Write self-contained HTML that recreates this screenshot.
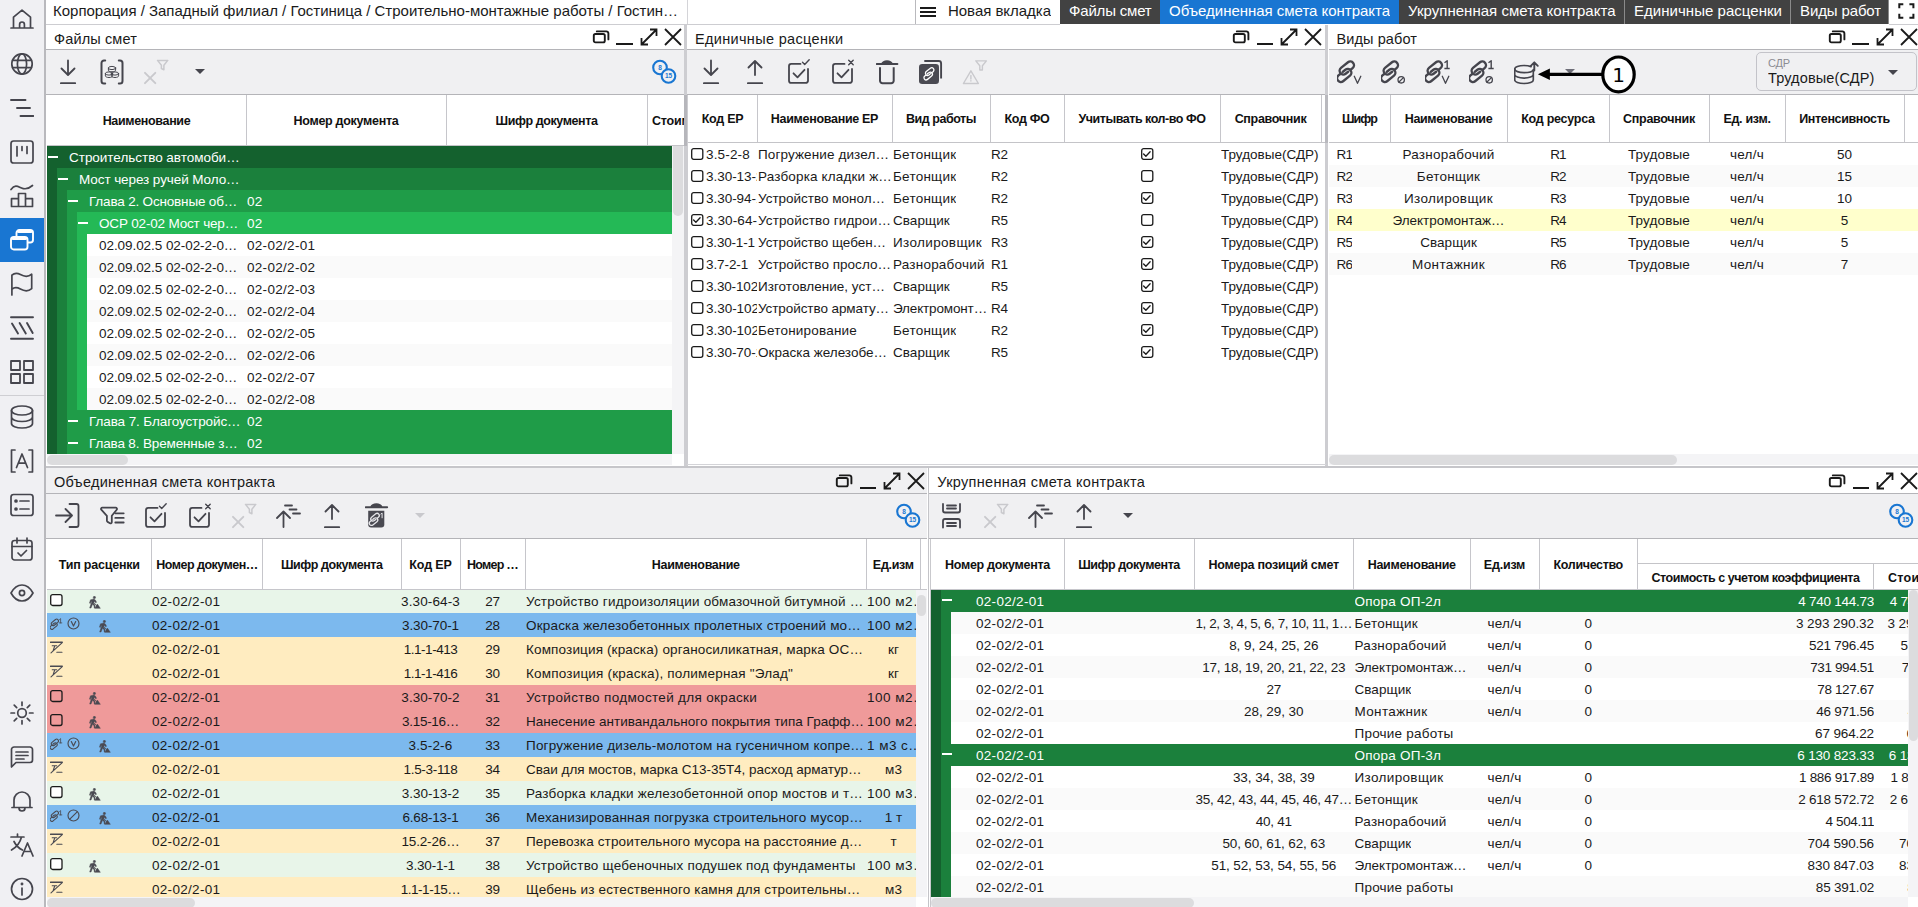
<!DOCTYPE html>
<html lang="ru"><head><meta charset="utf-8"><title>Смета контракта</title>
<style>
html,body{margin:0;padding:0}
body{width:1918px;height:907px;position:relative;overflow:hidden;background:#fff;font-family:"Liberation Sans",sans-serif;color:#1a1a1a}
.r{position:absolute;display:block}
.t{position:absolute;white-space:nowrap;overflow:hidden}
.e{text-overflow:ellipsis}
</style></head><body>
<div class="r" style="left:0px;top:0px;width:44px;height:907px;background:#f0f0f3;"></div>
<div class="r" style="left:44px;top:0px;width:2px;height:907px;background:#b9b9bd;"></div>
<div class="r" style="left:0px;top:218px;width:44px;height:44px;background:#1976d2;"></div>
<div class="r" style="left:0px;top:395px;width:44px;height:1px;background:#cfcfd3;"></div>
<svg class="r" style="left:10px;top:7px;stroke-width:1.7;" width="24" height="24" viewBox="0 0 24 24" fill="none" stroke="#45454d" stroke-width="1.8" stroke-linecap="round" stroke-linejoin="round"><path d="M1 21h22M3.5 21V10.2L12 3.2l8.5 7V21M9.6 21v-3.6a2.4 2.4 0 0 1 4.8 0V21"/></svg>
<svg class="r" style="left:10px;top:52px;stroke-width:1.7;" width="24" height="24" viewBox="0 0 24 24" fill="none" stroke="#45454d" stroke-width="1.8" stroke-linecap="round" stroke-linejoin="round"><circle cx="12" cy="12" r="10.2"/><ellipse cx="12" cy="12" rx="4.6" ry="10.2"/><path d="M2.6 8.4h18.8M2.6 15.6h18.8"/></svg>
<svg class="r" style="left:10px;top:96px;stroke-width:1.9;" width="24" height="24" viewBox="0 0 24 24" fill="none" stroke="#45454d" stroke-width="1.8" stroke-linecap="round" stroke-linejoin="round"><path d="M1 4h14.5M7 12h13M10.5 20h13"/></svg>
<svg class="r" style="left:10px;top:140px;stroke-width:1.7;" width="24" height="24" viewBox="0 0 24 24" fill="none" stroke="#45454d" stroke-width="1.8" stroke-linecap="round" stroke-linejoin="round"><rect x="1" y="1" width="22" height="22" rx="2.6"/><path d="M7 6.5v9.5M12 6.5v4M17 6.5v7"/></svg>
<svg class="r" style="left:10px;top:184px;stroke-width:1.7;" width="24" height="24" viewBox="0 0 24 24" fill="none" stroke="#45454d" stroke-width="1.8" stroke-linecap="round" stroke-linejoin="round"><path d="M1 5.5c4-5.5 7-3 10.5-1.5s7 1 11-2.5"/><path d="M1.5 22.5v-7.8h7v7.8M8.5 22.5V9.5h7v13M15.5 22.5v-7.8h7v7.8M1.5 22.5h21"/></svg>
<svg class="r" style="left:10px;top:228px;stroke-width:1.9;stroke:#fff;" width="24" height="24" viewBox="0 0 24 24" fill="none" stroke="#45454d" stroke-width="1.8" stroke-linecap="round" stroke-linejoin="round"><rect x="6.500" y="2" width="16.500" height="12.500" rx="2.800"/><path d="M8.500 3.400h12.500" stroke-width="3"/><rect x="1" y="9" width="16.500" height="12.500" rx="2.800" fill="#1976d2"/><path d="M3 10.400h12.500" stroke-width="3"/></svg>
<svg class="r" style="left:10px;top:272px;stroke-width:1.7;" width="24" height="24" viewBox="0 0 24 24" fill="none" stroke="#45454d" stroke-width="1.8" stroke-linecap="round" stroke-linejoin="round"><path d="M1.900 23V3.200c2-1.800 4.500-2.800 8.500-.6s7.500 2.800 11.300-.4v14.500c-3.800 3.200-7.300 2.600-11.300.4s-6.500-1.600-8.500.2"/></svg>
<svg class="r" style="left:10px;top:316px;stroke-width:1.9;" width="24" height="24" viewBox="0 0 24 24" fill="none" stroke="#45454d" stroke-width="1.8" stroke-linecap="round" stroke-linejoin="round"><path d="M1 1.200h22M1 22.800h22"/><path d="M2 7.500l6 10M9.600 7l6.200 10.500M17 7l5.700 10" /></svg>
<svg class="r" style="left:10px;top:360px;stroke-width:1.8;" width="24" height="24" viewBox="0 0 24 24" fill="none" stroke="#45454d" stroke-width="1.8" stroke-linecap="round" stroke-linejoin="round"><rect x="1" y="1" width="9" height="9"/><rect x="14" y="1" width="9" height="9"/><rect x="1" y="14" width="9" height="9"/><rect x="14" y="14" width="9" height="9"/></svg>
<svg class="r" style="left:10px;top:405px;stroke-width:1.7;" width="24" height="24" viewBox="0 0 24 24" fill="none" stroke="#45454d" stroke-width="1.8" stroke-linecap="round" stroke-linejoin="round"><ellipse cx="12" cy="5.5" rx="10.5" ry="4.5"/><path d="M1.5 5.5v13c0 2.5 4.7 4.5 10.5 4.5s10.5-2 10.5-4.5v-13M1.5 12c0 2.5 4.7 4.5 10.5 4.5s10.5-2 10.5-4.5"/></svg>
<svg class="r" style="left:10px;top:449px;stroke-width:1.7;" width="24" height="24" viewBox="0 0 24 24" fill="none" stroke="#45454d" stroke-width="1.8" stroke-linecap="round" stroke-linejoin="round"><path d="M5 1H1.5v22H5M19 1h3.5v22H19"/><path d="M6.5 18.5L12 5l5.5 13.500M8.300 14.200h7.4"/></svg>
<svg class="r" style="left:10px;top:493px;stroke-width:1.7;" width="24" height="24" viewBox="0 0 24 24" fill="none" stroke="#45454d" stroke-width="1.8" stroke-linecap="round" stroke-linejoin="round"><rect x="1" y="1.5" width="22" height="21" rx="2.6"/><path d="M10 8h9M10 16h9"/><circle cx="6" cy="8" r="1" fill="#45454d"/><circle cx="6" cy="16" r="1" fill="#45454d"/></svg>
<svg class="r" style="left:10px;top:537px;stroke-width:1.7;" width="24" height="24" viewBox="0 0 24 24" fill="none" stroke="#45454d" stroke-width="1.8" stroke-linecap="round" stroke-linejoin="round"><rect x="2" y="3.5" width="20" height="19.5" rx="2.6"/><path d="M2 9.500h20M7 1v5M17 1v5M8 16l3 3 5.500-5.500"/></svg>
<svg class="r" style="left:10px;top:581px;stroke-width:1.7;" width="24" height="24" viewBox="0 0 24 24" fill="none" stroke="#45454d" stroke-width="1.8" stroke-linecap="round" stroke-linejoin="round"><path d="M1 12c3-5.500 7-8 11-8s8 2.500 11 8c-3 5.500-7 8-11 8s-8-2.500-11-8z"/><circle cx="12" cy="12" r="2.600"/></svg>
<svg class="r" style="left:10px;top:701px;stroke-width:1.7;" width="24" height="24" viewBox="0 0 24 24" fill="none" stroke="#45454d" stroke-width="1.8" stroke-linecap="round" stroke-linejoin="round"><circle cx="12" cy="12" r="4.300"/><path d="M12 1v3.500M12 19.500V23M1 12h3.500M19.500 12H23M4.200 4.200l2.500 2.500M17.300 17.300l2.500 2.500M19.800 4.200l-2.500 2.500M6.700 17.300l-2.500 2.500"/></svg>
<svg class="r" style="left:10px;top:745px;stroke-width:1.7;" width="24" height="24" viewBox="0 0 24 24" fill="none" stroke="#45454d" stroke-width="1.8" stroke-linecap="round" stroke-linejoin="round"><path d="M1.500 22V4.600A2.600 2.600 0 0 1 4.100 2h15.800a2.600 2.600 0 0 1 2.600 2.600v10.300a2.600 2.600 0 0 1-2.600 2.600H6z"/><path d="M6 7h12M6 10.500h12M6 14h8"/></svg>
<svg class="r" style="left:10px;top:789px;stroke-width:1.7;" width="24" height="24" viewBox="0 0 24 24" fill="none" stroke="#45454d" stroke-width="1.8" stroke-linecap="round" stroke-linejoin="round"><path d="M2 18.500h20M4 18.500V11a8 8 0 0 1 16 0v7.500M9 19a3 3 0 0 0 6 0"/></svg>
<svg class="r" style="left:10px;top:833px;stroke-width:1.7;" width="24" height="24" viewBox="0 0 24 24" fill="none" stroke="#45454d" stroke-width="1.8" stroke-linecap="round" stroke-linejoin="round"><path d="M1 4h13M7.500 1v3M11.500 4C10 10 6 14.500 1.500 17M4 8.500c2 4 5 7 8.500 8.500"/><path d="M12 23l5.500-13L23 23M14 18.500h7"/></svg>
<svg class="r" style="left:10px;top:877px;stroke-width:1.7;" width="24" height="24" viewBox="0 0 24 24" fill="none" stroke="#45454d" stroke-width="1.8" stroke-linecap="round" stroke-linejoin="round"><circle cx="12" cy="12" r="10.500"/><path d="M12 11v7"/><circle cx="12" cy="7" r="0.600" fill="#45454d"/></svg>
<div class="t" style="left:53px;top:-0.6px;height:24px;line-height:24px;font-size:15px;letter-spacing:-0.014px;">Корпорация / Западный филиал / Гостиница / Строительно-монтажные работы / Гостин…</div>
<div class="r" style="left:915px;top:0px;width:1px;height:24px;background:#b9b9bd;"></div>
<div class="r" style="left:920px;top:7px;width:16px;height:2px;background:#1a1a1a;"></div>
<div class="r" style="left:920px;top:11px;width:16px;height:2px;background:#1a1a1a;"></div>
<div class="r" style="left:920px;top:15px;width:16px;height:2px;background:#1a1a1a;"></div>
<div class="t" style="left:948px;top:-0.6px;height:24px;line-height:24px;font-size:15px;letter-spacing:-0.030px;">Новая вкладка</div>
<div class="r" style="left:1060px;top:0px;width:829px;height:24px;background:#8a8a8a;"></div>
<div class="r" style="left:1060px;top:0px;width:100px;height:24px;background:#424242;"></div>
<div class="t" style="left:1069px;top:-0.6px;height:24px;line-height:24px;font-size:15px;color:#fff;letter-spacing:-0.185px;">Файлы смет</div>
<div class="r" style="left:1160px;top:0px;width:239px;height:24px;background:#1976d2;"></div>
<div class="t" style="left:1169px;top:-0.6px;height:24px;line-height:24px;font-size:15px;color:#fff;letter-spacing:-0.023px;">Объединенная смета контракта</div>
<div class="r" style="left:1399px;top:0px;width:225px;height:24px;background:#424242;"></div>
<div class="t" style="left:1408px;top:-0.6px;height:24px;line-height:24px;font-size:15px;color:#fff;letter-spacing:0.034px;">Укрупненная смета контракта</div>
<div class="r" style="left:1625px;top:0px;width:165px;height:24px;background:#424242;"></div>
<div class="t" style="left:1634px;top:-0.6px;height:24px;line-height:24px;font-size:15px;color:#fff;letter-spacing:0.036px;">Единичные расценки</div>
<div class="r" style="left:1791px;top:0px;width:97px;height:24px;background:#424242;"></div>
<div class="t" style="left:1800px;top:-0.6px;height:24px;line-height:24px;font-size:15px;color:#fff;letter-spacing:-0.124px;">Виды работ</div>
<svg class="r" style="left:1894px;top:0px;stroke:#1a1a1a;stroke-width:2;stroke-linecap:butt;stroke-linejoin:miter" width="24" height="24" viewBox="0 0 24 24" fill="none" stroke="#45454d" stroke-width="1.8" stroke-linecap="round" stroke-linejoin="round"><path d="M5.300 8.200V4.200h4M15.400 4.200h4v4M19.400 13.700v4h-4M9.300 17.700h-4v-4"/></svg>
<div class="r" style="left:46px;top:24.3px;width:639px;height:24.7px;background:#ffffff;"></div>
<div class="t" style="left:54px;top:26.6px;height:25px;line-height:25px;font-size:14.5px;letter-spacing:0.146px;">Файлы смет</div>
<div class="r" style="left:46px;top:49px;width:639px;height:1px;background:#b4b4b8;"></div>
<div class="r" style="left:46px;top:50px;width:639px;height:44px;background:#f0f0f2;"></div>
<div class="r" style="left:46px;top:94px;width:639px;height:1px;background:#b4b4b8;"></div>
<svg class="r" style="left:591.5px;top:25px;stroke:#1a1a1a;stroke-width:1.900" width="20" height="24" viewBox="0 0 20 24" fill="none" stroke="#45454d" stroke-width="1.8" stroke-linecap="round" stroke-linejoin="round"><rect x="1.8" y="9" width="11" height="8.4" rx="1.6"/><path d="M4.8 6.4h9.6a2 2 0 0 1 2 2v6"/></svg>
<div class="r" style="left:616.0px;top:43.2px;width:16.5px;height:1.6px;background:#1a1a1a;"></div>
<svg class="r" style="left:638.5px;top:27px;stroke:#1a1a1a;stroke-width:1.800;stroke-linecap:butt;stroke-linejoin:miter" width="20" height="20" viewBox="0 0 20 20" fill="none" stroke="#45454d" stroke-width="1.8" stroke-linecap="round" stroke-linejoin="round"><path d="M2.5 17.5L17.5 2.5M11 2.5h6.5V9M2.5 11v6.5H9"/></svg>
<svg class="r" style="left:662.5px;top:27px;stroke:#1a1a1a;stroke-width:1.800;stroke-linecap:butt" width="20" height="20" viewBox="0 0 20 20" fill="none" stroke="#45454d" stroke-width="1.8" stroke-linecap="round" stroke-linejoin="round"><path d="M2 2l16 16M18 2L2 18"/></svg>
<svg class="r" style="left:60px;top:58px;" width="28" height="28" viewBox="0 0 28 28" fill="none" stroke="#45454d" stroke-width="1.8" stroke-linecap="round" stroke-linejoin="round"><path d="M8 2.500v14M1.500 10.500L8 17l6.500-6.500M0.800 25.200h14.400"/></svg>
<svg class="r" style="left:100px;top:58px;" width="28" height="28" viewBox="0 0 28 28" fill="none" stroke="#45454d" stroke-width="1.8" stroke-linecap="round" stroke-linejoin="round"><path d="M5.200 2.500H4a2.500 2.500 0 0 0-2.500 2.500v18A2.500 2.500 0 0 0 4 25.500h1.200M18.800 2.500H20a2.500 2.500 0 0 1 2.500 2.500v18a2.500 2.500 0 0 1-2.500 2.500h-1.200" stroke-width="2"/><g stroke-width="1"><ellipse cx="12" cy="10" rx="3.600" ry="1.600"/><path d="M8.400 10v2.200c0 .9 1.600 1.600 3.600 1.600s3.600-.7 3.600-1.600V10"/><ellipse cx="9" cy="15.500" rx="3.600" ry="1.600"/><path d="M5.400 15.500v2.400c0 .9 1.600 1.600 3.600 1.600s3.600-.7 3.600-1.600v-2.400"/><ellipse cx="15" cy="15.500" rx="3.600" ry="1.600"/><path d="M11.400 15.500v2.400c0 .9 1.600 1.600 3.600 1.600s3.600-.7 3.600-1.600v-2.400"/></g></svg>
<svg class="r" style="left:144.1px;top:58px;stroke:#c9c9cd;stroke-width:1.900" width="28" height="28" viewBox="0 0 28 28" fill="none" stroke="#45454d" stroke-width="1.8" stroke-linecap="round" stroke-linejoin="round"><path d="M1 14.800l10.300 10.400M11.300 14.800L1 25.200"/><path d="M13.500 2.400h10.300l-3.900 4.800v4.600l-2.500-1.300V7.200z" stroke-width="1.500"/></svg>
<svg class="r" style="left:195px;top:69px" width="10" height="5" viewBox="0 0 10 5"><path d="M0 0h10L5 5z" fill="#45454d"/></svg>
<svg class="r" style="left:651px;top:59px" width="28" height="28" viewBox="0 0 28 28" fill="#f0f0f2" stroke="#1976d2" stroke-width="2.100"><circle cx="9" cy="8.500" r="6.800"/><circle cx="17.500" cy="17" r="6.800"/><text x="9" y="10.800" font-size="6.500" font-weight="bold" text-anchor="middle" fill="#1976d2" stroke="none" font-family="Liberation Sans,sans-serif">8</text><text x="17.500" y="19.300" font-size="6.500" font-weight="bold" text-anchor="middle" fill="#1976d2" stroke="none" font-family="Liberation Sans,sans-serif">15</text></svg>
<div class="t" style="left:47px;top:95.9px;height:50px;line-height:50px;font-size:12.5px;font-weight:bold;color:#111;width:199px;text-align:center;letter-spacing:-0.342px;">Наименование</div>
<div class="r" style="left:246px;top:95px;width:1px;height:50px;background:#c6c6cb;"></div>
<div class="t" style="left:246px;top:95.9px;height:50px;line-height:50px;font-size:12.5px;font-weight:bold;color:#111;width:200px;text-align:center;letter-spacing:-0.282px;">Номер документа</div>
<div class="r" style="left:446px;top:95px;width:1px;height:50px;background:#c6c6cb;"></div>
<div class="t" style="left:446px;top:95.9px;height:50px;line-height:50px;font-size:12.5px;font-weight:bold;color:#111;width:201px;text-align:center;letter-spacing:-0.409px;">Шифр документа</div>
<div class="r" style="left:647px;top:95px;width:1px;height:50px;background:#c6c6cb;"></div>
<div class="r" style="left:47px;top:145px;width:637px;height:1px;background:#c4c4c8;"></div>
<div class="t" style="left:652px;top:95.9px;height:50px;line-height:50px;font-size:12.5px;font-weight:bold;color:#111;width:32px;text-align:left;letter-spacing:-0.225px;">Стоимость</div>
<div class="r" style="left:47px;top:146px;width:625px;height:22px;background:#14612e;"></div>
<div class="r" style="left:48px;top:155.5px;width:9.5px;height:2px;background:#fff;"></div>
<div class="t" style="left:69px;top:147.0px;height:22px;line-height:22px;font-size:13.5px;color:#fff;letter-spacing:-0.025px;">Строительство автомоби…</div>
<div class="r" style="left:47px;top:168px;width:10px;height:22px;background:#14612e;"></div>
<div class="r" style="left:57px;top:168px;width:615px;height:22px;background:#1b803c;"></div>
<div class="r" style="left:58px;top:177.5px;width:9.5px;height:2px;background:#fff;"></div>
<div class="t" style="left:79px;top:169.0px;height:22px;line-height:22px;font-size:13.5px;color:#fff;letter-spacing:-0.085px;">Мост через ручей Моло…</div>
<div class="r" style="left:47px;top:190px;width:10px;height:22px;background:#14612e;"></div>
<div class="r" style="left:57px;top:190px;width:10px;height:22px;background:#1b803c;"></div>
<div class="r" style="left:67px;top:190px;width:605px;height:22px;background:#1f9c48;"></div>
<div class="r" style="left:68px;top:199.5px;width:9.5px;height:2px;background:#fff;"></div>
<div class="t" style="left:89px;top:191.0px;height:22px;line-height:22px;font-size:13.5px;color:#fff;letter-spacing:-0.179px;">Глава 2. Основные об…</div>
<div class="t" style="left:247px;top:191.0px;height:22px;line-height:22px;font-size:13.5px;color:#fff;letter-spacing:0.343px;">02</div>
<div class="r" style="left:47px;top:212px;width:10px;height:22px;background:#14612e;"></div>
<div class="r" style="left:57px;top:212px;width:10px;height:22px;background:#1b803c;"></div>
<div class="r" style="left:67px;top:212px;width:10px;height:22px;background:#1f9c48;"></div>
<div class="r" style="left:77px;top:212px;width:595px;height:22px;background:#24b956;"></div>
<div class="r" style="left:78px;top:221.5px;width:9.5px;height:2px;background:#fff;"></div>
<div class="t" style="left:99px;top:213.0px;height:22px;line-height:22px;font-size:13.5px;color:#fff;letter-spacing:-0.180px;">ОСР 02-02 Мост чер…</div>
<div class="t" style="left:247px;top:213.0px;height:22px;line-height:22px;font-size:13.5px;color:#fff;letter-spacing:0.343px;">02</div>
<div class="r" style="left:47px;top:234px;width:10px;height:22px;background:#14612e;"></div>
<div class="r" style="left:57px;top:234px;width:10px;height:22px;background:#1b803c;"></div>
<div class="r" style="left:67px;top:234px;width:10px;height:22px;background:#1f9c48;"></div>
<div class="r" style="left:77px;top:234px;width:10px;height:22px;background:#24b956;"></div>
<div class="r" style="left:87px;top:234px;width:585px;height:22px;background:#fff;"></div>
<div class="t" style="left:99px;top:235.0px;height:22px;line-height:22px;font-size:13.5px;color:#1a1a1a;letter-spacing:-0.061px;">02.09.02.5 02-02-2-0…</div>
<div class="t" style="left:247px;top:235.0px;height:22px;line-height:22px;font-size:13.5px;color:#1a1a1a;letter-spacing:0.301px;">02-02/2-01</div>
<div class="r" style="left:47px;top:256px;width:10px;height:22px;background:#14612e;"></div>
<div class="r" style="left:57px;top:256px;width:10px;height:22px;background:#1b803c;"></div>
<div class="r" style="left:67px;top:256px;width:10px;height:22px;background:#1f9c48;"></div>
<div class="r" style="left:77px;top:256px;width:10px;height:22px;background:#24b956;"></div>
<div class="r" style="left:87px;top:256px;width:585px;height:22px;background:#fafafa;"></div>
<div class="t" style="left:99px;top:257.0px;height:22px;line-height:22px;font-size:13.5px;color:#1a1a1a;letter-spacing:-0.061px;">02.09.02.5 02-02-2-0…</div>
<div class="t" style="left:247px;top:257.0px;height:22px;line-height:22px;font-size:13.5px;color:#1a1a1a;letter-spacing:0.301px;">02-02/2-02</div>
<div class="r" style="left:47px;top:278px;width:10px;height:22px;background:#14612e;"></div>
<div class="r" style="left:57px;top:278px;width:10px;height:22px;background:#1b803c;"></div>
<div class="r" style="left:67px;top:278px;width:10px;height:22px;background:#1f9c48;"></div>
<div class="r" style="left:77px;top:278px;width:10px;height:22px;background:#24b956;"></div>
<div class="r" style="left:87px;top:278px;width:585px;height:22px;background:#fff;"></div>
<div class="t" style="left:99px;top:279.0px;height:22px;line-height:22px;font-size:13.5px;color:#1a1a1a;letter-spacing:-0.061px;">02.09.02.5 02-02-2-0…</div>
<div class="t" style="left:247px;top:279.0px;height:22px;line-height:22px;font-size:13.5px;color:#1a1a1a;letter-spacing:0.301px;">02-02/2-03</div>
<div class="r" style="left:47px;top:300px;width:10px;height:22px;background:#14612e;"></div>
<div class="r" style="left:57px;top:300px;width:10px;height:22px;background:#1b803c;"></div>
<div class="r" style="left:67px;top:300px;width:10px;height:22px;background:#1f9c48;"></div>
<div class="r" style="left:77px;top:300px;width:10px;height:22px;background:#24b956;"></div>
<div class="r" style="left:87px;top:300px;width:585px;height:22px;background:#fafafa;"></div>
<div class="t" style="left:99px;top:301.0px;height:22px;line-height:22px;font-size:13.5px;color:#1a1a1a;letter-spacing:-0.061px;">02.09.02.5 02-02-2-0…</div>
<div class="t" style="left:247px;top:301.0px;height:22px;line-height:22px;font-size:13.5px;color:#1a1a1a;letter-spacing:0.301px;">02-02/2-04</div>
<div class="r" style="left:47px;top:322px;width:10px;height:22px;background:#14612e;"></div>
<div class="r" style="left:57px;top:322px;width:10px;height:22px;background:#1b803c;"></div>
<div class="r" style="left:67px;top:322px;width:10px;height:22px;background:#1f9c48;"></div>
<div class="r" style="left:77px;top:322px;width:10px;height:22px;background:#24b956;"></div>
<div class="r" style="left:87px;top:322px;width:585px;height:22px;background:#fff;"></div>
<div class="t" style="left:99px;top:323.0px;height:22px;line-height:22px;font-size:13.5px;color:#1a1a1a;letter-spacing:-0.061px;">02.09.02.5 02-02-2-0…</div>
<div class="t" style="left:247px;top:323.0px;height:22px;line-height:22px;font-size:13.5px;color:#1a1a1a;letter-spacing:0.301px;">02-02/2-05</div>
<div class="r" style="left:47px;top:344px;width:10px;height:22px;background:#14612e;"></div>
<div class="r" style="left:57px;top:344px;width:10px;height:22px;background:#1b803c;"></div>
<div class="r" style="left:67px;top:344px;width:10px;height:22px;background:#1f9c48;"></div>
<div class="r" style="left:77px;top:344px;width:10px;height:22px;background:#24b956;"></div>
<div class="r" style="left:87px;top:344px;width:585px;height:22px;background:#fafafa;"></div>
<div class="t" style="left:99px;top:345.0px;height:22px;line-height:22px;font-size:13.5px;color:#1a1a1a;letter-spacing:-0.061px;">02.09.02.5 02-02-2-0…</div>
<div class="t" style="left:247px;top:345.0px;height:22px;line-height:22px;font-size:13.5px;color:#1a1a1a;letter-spacing:0.301px;">02-02/2-06</div>
<div class="r" style="left:47px;top:366px;width:10px;height:22px;background:#14612e;"></div>
<div class="r" style="left:57px;top:366px;width:10px;height:22px;background:#1b803c;"></div>
<div class="r" style="left:67px;top:366px;width:10px;height:22px;background:#1f9c48;"></div>
<div class="r" style="left:77px;top:366px;width:10px;height:22px;background:#24b956;"></div>
<div class="r" style="left:87px;top:366px;width:585px;height:22px;background:#fff;"></div>
<div class="t" style="left:99px;top:367.0px;height:22px;line-height:22px;font-size:13.5px;color:#1a1a1a;letter-spacing:-0.061px;">02.09.02.5 02-02-2-0…</div>
<div class="t" style="left:247px;top:367.0px;height:22px;line-height:22px;font-size:13.5px;color:#1a1a1a;letter-spacing:0.301px;">02-02/2-07</div>
<div class="r" style="left:47px;top:388px;width:10px;height:22px;background:#14612e;"></div>
<div class="r" style="left:57px;top:388px;width:10px;height:22px;background:#1b803c;"></div>
<div class="r" style="left:67px;top:388px;width:10px;height:22px;background:#1f9c48;"></div>
<div class="r" style="left:77px;top:388px;width:10px;height:22px;background:#24b956;"></div>
<div class="r" style="left:87px;top:388px;width:585px;height:22px;background:#fafafa;"></div>
<div class="t" style="left:99px;top:389.0px;height:22px;line-height:22px;font-size:13.5px;color:#1a1a1a;letter-spacing:-0.061px;">02.09.02.5 02-02-2-0…</div>
<div class="t" style="left:247px;top:389.0px;height:22px;line-height:22px;font-size:13.5px;color:#1a1a1a;letter-spacing:0.301px;">02-02/2-08</div>
<div class="r" style="left:47px;top:410px;width:10px;height:22px;background:#14612e;"></div>
<div class="r" style="left:57px;top:410px;width:10px;height:22px;background:#1b803c;"></div>
<div class="r" style="left:67px;top:410px;width:605px;height:22px;background:#1f9c48;"></div>
<div class="r" style="left:68px;top:419.5px;width:9.5px;height:2px;background:#fff;"></div>
<div class="t" style="left:89px;top:411.0px;height:22px;line-height:22px;font-size:13.5px;color:#fff;letter-spacing:-0.097px;">Глава 7. Благоустройс…</div>
<div class="t" style="left:247px;top:411.0px;height:22px;line-height:22px;font-size:13.5px;color:#fff;letter-spacing:0.343px;">02</div>
<div class="r" style="left:47px;top:432px;width:10px;height:22px;background:#14612e;"></div>
<div class="r" style="left:57px;top:432px;width:10px;height:22px;background:#1b803c;"></div>
<div class="r" style="left:67px;top:432px;width:605px;height:22px;background:#1f9c48;"></div>
<div class="r" style="left:68px;top:441.5px;width:9.5px;height:2px;background:#fff;"></div>
<div class="t" style="left:89px;top:433.0px;height:22px;line-height:22px;font-size:13.5px;color:#fff;letter-spacing:-0.142px;">Глава 8. Временные з…</div>
<div class="t" style="left:247px;top:433.0px;height:22px;line-height:22px;font-size:13.5px;color:#fff;letter-spacing:0.343px;">02</div>
<div class="r" style="left:672px;top:146px;width:12px;height:308px;background:#f4f4f6;"></div>
<div class="r" style="left:673px;top:146px;width:9.5px;height:70px;background:#dcdcde;border-radius:0 0 5px 5px"></div>
<div class="r" style="left:47px;top:454px;width:625px;height:11px;background:#f4f4f6;"></div>
<div class="r" style="left:47px;top:455px;width:81px;height:10px;background:#dcdcde;border-radius:5px"></div>
<div class="r" style="left:684.4px;top:25px;width:3.2px;height:441px;background:#cdcdd1;"></div>
<div class="r" style="left:684.4px;top:95px;width:2.4px;height:51px;background:#b6b6bb;"></div>
<div class="r" style="left:687px;top:24.3px;width:639px;height:24.7px;background:#ffffff;"></div>
<div class="t" style="left:695px;top:26.6px;height:25px;line-height:25px;font-size:14.5px;letter-spacing:0.325px;">Единичные расценки</div>
<div class="r" style="left:687px;top:49px;width:639px;height:1px;background:#b4b4b8;"></div>
<div class="r" style="left:687px;top:50px;width:639px;height:44px;background:#f0f0f2;"></div>
<div class="r" style="left:687px;top:94px;width:639px;height:1px;background:#b4b4b8;"></div>
<svg class="r" style="left:1232px;top:25px;stroke:#1a1a1a;stroke-width:1.900" width="20" height="24" viewBox="0 0 20 24" fill="none" stroke="#45454d" stroke-width="1.8" stroke-linecap="round" stroke-linejoin="round"><rect x="1.8" y="9" width="11" height="8.4" rx="1.6"/><path d="M4.8 6.4h9.6a2 2 0 0 1 2 2v6"/></svg>
<div class="r" style="left:1256.5px;top:43.2px;width:16.5px;height:1.6px;background:#1a1a1a;"></div>
<svg class="r" style="left:1279px;top:27px;stroke:#1a1a1a;stroke-width:1.800;stroke-linecap:butt;stroke-linejoin:miter" width="20" height="20" viewBox="0 0 20 20" fill="none" stroke="#45454d" stroke-width="1.8" stroke-linecap="round" stroke-linejoin="round"><path d="M2.5 17.5L17.5 2.5M11 2.5h6.5V9M2.5 11v6.5H9"/></svg>
<svg class="r" style="left:1303px;top:27px;stroke:#1a1a1a;stroke-width:1.800;stroke-linecap:butt" width="20" height="20" viewBox="0 0 20 20" fill="none" stroke="#45454d" stroke-width="1.8" stroke-linecap="round" stroke-linejoin="round"><path d="M2 2l16 16M18 2L2 18"/></svg>
<svg class="r" style="left:703px;top:58px;" width="28" height="28" viewBox="0 0 28 28" fill="none" stroke="#45454d" stroke-width="1.8" stroke-linecap="round" stroke-linejoin="round"><path d="M8 2.500v14M1.500 10.500L8 17l6.500-6.500M0.800 25.200h14.400"/></svg>
<svg class="r" style="left:747px;top:58px;" width="28" height="28" viewBox="0 0 28 28" fill="none" stroke="#45454d" stroke-width="1.8" stroke-linecap="round" stroke-linejoin="round"><path d="M8 17V3M1.500 9.500L8 3l6.500 6.500M0.800 25.200h14.400"/></svg>
<svg class="r" style="left:788px;top:58px;" width="28" height="28" viewBox="0 0 28 28" fill="none" stroke="#45454d" stroke-width="1.8" stroke-linecap="round" stroke-linejoin="round"><path d="M12.500 5.900H3.200a2.200 2.200 0 0 0-2.200 2.200v14.600a2.200 2.200 0 0 0 2.200 2.200h14.600a2.200 2.200 0 0 0 2.200-2.200V11"/><path d="M5.500 15.300l4 4 7-7.500"/><path d="M14.500 4.300l2.200 2.200 4.500-4.800" stroke-width="1.400"/></svg>
<svg class="r" style="left:832px;top:58px;" width="28" height="28" viewBox="0 0 28 28" fill="none" stroke="#45454d" stroke-width="1.8" stroke-linecap="round" stroke-linejoin="round"><path d="M12.500 5.900H3.200a2.200 2.200 0 0 0-2.200 2.200v14.600a2.200 2.200 0 0 0 2.200 2.200h14.600a2.200 2.200 0 0 0 2.200-2.200V11"/><path d="M5.500 15.300l4 4 7-7.500"/><path d="M16.700 2.300l4.500 4.500M21.200 2.300l-4.500 4.500" stroke-width="1.400"/></svg>
<svg class="r" style="left:876px;top:58px;" width="28" height="28" viewBox="0 0 28 28" fill="none" stroke="#45454d" stroke-width="1.8" stroke-linecap="round" stroke-linejoin="round"><path d="M0.800 6h20.600" stroke-width="2"/><path d="M5.200 5.800c.8-4.800 10.800-4.800 11.600 0z" fill="#45454d" stroke="none"/><path d="M4 9.300v13.400a2.500 2.500 0 0 0 2.500 2.500h8.700a2.500 2.500 0 0 0 2.500-2.500V9.300" stroke-width="2" stroke-linecap="butt"/></svg>
<svg class="r" style="left:918px;top:58px;" width="28" height="28" viewBox="0 0 28 28" fill="none" stroke="#45454d" stroke-width="1.8" stroke-linecap="round" stroke-linejoin="round"><path d="M6.300 3h14.400a2.400 2.400 0 0 1 2.400 2.400v15" stroke-width="1.900" stroke-linecap="butt"/><rect x="1" y="6" width="20" height="20" rx="3.200" fill="#4a4a52" stroke="none"/><path d="M14.10 14.46L15.11 13.65A2.18 2.18 0 0 0 12.38 10.24L8.25 13.55A2.18 2.18 0 0 0 10.98 16.96L12.45 15.78M7.79 17.16L6.78 17.97A2.18 2.18 0 0 0 9.51 21.38L13.58 18.08A2.18 2.18 0 0 0 10.85 14.67L9.38 15.85" stroke="#fff" stroke-width="1.300"/></svg>
<svg class="r" style="left:962px;top:58px;stroke:#c9c9cd;stroke-width:1.400" width="28" height="28" viewBox="0 0 28 28" fill="none" stroke="#45454d" stroke-width="1.8" stroke-linecap="round" stroke-linejoin="round"><path d="M8.900 12.800l7.500 12.700H1.400z"/><path d="M8.900 17.500v3.500M8.900 22.800v.3"/><path d="M13.800 2.900h10.600l-4 4.800v4.300h-2.600V7.700z"/></svg>
<div class="t" style="left:688px;top:95.9px;height:47px;line-height:47px;font-size:12.5px;font-weight:bold;color:#111;width:69px;text-align:center;letter-spacing:-0.264px;">Код ЕР</div>
<div class="r" style="left:757px;top:95px;width:1px;height:47px;background:#c6c6cb;"></div>
<div class="t" style="left:757px;top:95.9px;height:47px;line-height:47px;font-size:12.5px;font-weight:bold;color:#111;width:135px;text-align:center;letter-spacing:-0.303px;">Наименование ЕР</div>
<div class="r" style="left:892px;top:95px;width:1px;height:47px;background:#c6c6cb;"></div>
<div class="t" style="left:892px;top:95.9px;height:47px;line-height:47px;font-size:12.5px;font-weight:bold;color:#111;width:98px;text-align:center;letter-spacing:-0.455px;">Вид работы</div>
<div class="r" style="left:990px;top:95px;width:1px;height:47px;background:#c6c6cb;"></div>
<div class="t" style="left:990px;top:95.9px;height:47px;line-height:47px;font-size:12.5px;font-weight:bold;color:#111;width:74px;text-align:center;letter-spacing:-0.317px;">Код ФО</div>
<div class="r" style="left:1064px;top:95px;width:1px;height:47px;background:#c6c6cb;"></div>
<div class="t" style="left:1064px;top:95.9px;height:47px;line-height:47px;font-size:12.5px;font-weight:bold;color:#111;width:156px;text-align:center;letter-spacing:-0.463px;">Учитывать кол-во ФО</div>
<div class="r" style="left:1220px;top:95px;width:1px;height:47px;background:#c6c6cb;"></div>
<div class="t" style="left:1220px;top:95.9px;height:47px;line-height:47px;font-size:12.5px;font-weight:bold;color:#111;width:101px;text-align:center;letter-spacing:-0.306px;">Справочник</div>
<div class="r" style="left:1321px;top:95px;width:1px;height:47px;background:#c6c6cb;"></div>
<div class="r" style="left:688px;top:142px;width:638px;height:1px;background:#c4c4c8;"></div>
<svg class="r" style="left:691px;top:148px" width="13" height="13" viewBox="0 0 13 13" fill="none" stroke="#1a1a1a" stroke-width="1.300" stroke-linecap="round" stroke-linejoin="round"><rect x="0.700" y="0.700" width="11.1" height="10.6" rx="2" fill="#fff"/></svg>
<div class="t" style="left:706px;top:144.0px;height:22px;line-height:22px;font-size:13.5px;width:51px;text-align:left;letter-spacing:0.167px;">3.5-2-8</div>
<div class="t" style="left:758px;top:144.0px;height:22px;line-height:22px;font-size:13.5px;letter-spacing:0.113px;">Погружение дизел…</div>
<div class="t" style="left:893px;top:144.0px;height:22px;line-height:22px;font-size:13.5px;letter-spacing:0.242px;">Бетонщик</div>
<div class="t" style="left:991px;top:144.0px;height:22px;line-height:22px;font-size:13.5px;letter-spacing:-0.278px;">R2</div>
<svg class="r" style="left:1140.5px;top:148px" width="13" height="13" viewBox="0 0 13 13" fill="none" stroke="#1a1a1a" stroke-width="1.300" stroke-linecap="round" stroke-linejoin="round"><rect x="0.700" y="0.700" width="11.1" height="10.6" rx="2" fill="#fff"/><path d="M2.600 6l2.300 2.300 4.200-4.600" /></svg>
<div class="t" style="left:1221px;top:144.0px;height:22px;line-height:22px;font-size:13.5px;letter-spacing:0.008px;">Трудовые(СДР)</div>
<svg class="r" style="left:691px;top:170px" width="13" height="13" viewBox="0 0 13 13" fill="none" stroke="#1a1a1a" stroke-width="1.300" stroke-linecap="round" stroke-linejoin="round"><rect x="0.700" y="0.700" width="11.1" height="10.6" rx="2" fill="#fff"/></svg>
<div class="t" style="left:706px;top:166.0px;height:22px;line-height:22px;font-size:13.5px;width:51px;text-align:left;letter-spacing:-0.031px;">3.30-13-2</div>
<div class="t" style="left:758px;top:166.0px;height:22px;line-height:22px;font-size:13.5px;letter-spacing:0.155px;">Разборка кладки ж…</div>
<div class="t" style="left:893px;top:166.0px;height:22px;line-height:22px;font-size:13.5px;letter-spacing:0.242px;">Бетонщик</div>
<div class="t" style="left:991px;top:166.0px;height:22px;line-height:22px;font-size:13.5px;letter-spacing:-0.278px;">R2</div>
<svg class="r" style="left:1140.5px;top:170px" width="13" height="13" viewBox="0 0 13 13" fill="none" stroke="#1a1a1a" stroke-width="1.300" stroke-linecap="round" stroke-linejoin="round"><rect x="0.700" y="0.700" width="11.1" height="10.6" rx="2" fill="#fff"/></svg>
<div class="t" style="left:1221px;top:166.0px;height:22px;line-height:22px;font-size:13.5px;letter-spacing:0.008px;">Трудовые(СДР)</div>
<svg class="r" style="left:691px;top:192px" width="13" height="13" viewBox="0 0 13 13" fill="none" stroke="#1a1a1a" stroke-width="1.300" stroke-linecap="round" stroke-linejoin="round"><rect x="0.700" y="0.700" width="11.1" height="10.6" rx="2" fill="#fff"/></svg>
<div class="t" style="left:706px;top:188.0px;height:22px;line-height:22px;font-size:13.5px;width:51px;text-align:left;letter-spacing:-0.031px;">3.30-94-1</div>
<div class="t" style="left:758px;top:188.0px;height:22px;line-height:22px;font-size:13.5px;letter-spacing:-0.012px;">Устройство монол…</div>
<div class="t" style="left:893px;top:188.0px;height:22px;line-height:22px;font-size:13.5px;letter-spacing:0.242px;">Бетонщик</div>
<div class="t" style="left:991px;top:188.0px;height:22px;line-height:22px;font-size:13.5px;letter-spacing:-0.278px;">R2</div>
<svg class="r" style="left:1140.5px;top:192px" width="13" height="13" viewBox="0 0 13 13" fill="none" stroke="#1a1a1a" stroke-width="1.300" stroke-linecap="round" stroke-linejoin="round"><rect x="0.700" y="0.700" width="11.1" height="10.6" rx="2" fill="#fff"/><path d="M2.600 6l2.300 2.300 4.200-4.600" /></svg>
<div class="t" style="left:1221px;top:188.0px;height:22px;line-height:22px;font-size:13.5px;letter-spacing:0.008px;">Трудовые(СДР)</div>
<svg class="r" style="left:691px;top:214px" width="13" height="13" viewBox="0 0 13 13" fill="none" stroke="#1a1a1a" stroke-width="1.300" stroke-linecap="round" stroke-linejoin="round"><rect x="0.700" y="0.700" width="11.1" height="10.6" rx="2" fill="#fff"/><path d="M2.600 6l2.300 2.300 4.200-4.600" /></svg>
<div class="t" style="left:706px;top:210.0px;height:22px;line-height:22px;font-size:13.5px;width:51px;text-align:left;letter-spacing:0.114px;">3.30-64-3</div>
<div class="t" style="left:758px;top:210.0px;height:22px;line-height:22px;font-size:13.5px;letter-spacing:0.124px;">Устройство гидрои…</div>
<div class="t" style="left:893px;top:210.0px;height:22px;line-height:22px;font-size:13.5px;letter-spacing:0.052px;">Сварщик</div>
<div class="t" style="left:991px;top:210.0px;height:22px;line-height:22px;font-size:13.5px;letter-spacing:-0.278px;">R5</div>
<svg class="r" style="left:1140.5px;top:214px" width="13" height="13" viewBox="0 0 13 13" fill="none" stroke="#1a1a1a" stroke-width="1.300" stroke-linecap="round" stroke-linejoin="round"><rect x="0.700" y="0.700" width="11.1" height="10.6" rx="2" fill="#fff"/></svg>
<div class="t" style="left:1221px;top:210.0px;height:22px;line-height:22px;font-size:13.5px;letter-spacing:0.008px;">Трудовые(СДР)</div>
<svg class="r" style="left:691px;top:236px" width="13" height="13" viewBox="0 0 13 13" fill="none" stroke="#1a1a1a" stroke-width="1.300" stroke-linecap="round" stroke-linejoin="round"><rect x="0.700" y="0.700" width="11.1" height="10.6" rx="2" fill="#fff"/></svg>
<div class="t" style="left:706px;top:232.0px;height:22px;line-height:22px;font-size:13.5px;width:51px;text-align:left;letter-spacing:-0.188px;">3.30-1-1</div>
<div class="t" style="left:758px;top:232.0px;height:22px;line-height:22px;font-size:13.5px;letter-spacing:-0.043px;">Устройство щебен…</div>
<div class="t" style="left:893px;top:232.0px;height:22px;line-height:22px;font-size:13.5px;letter-spacing:0.354px;">Изолировщик</div>
<div class="t" style="left:991px;top:232.0px;height:22px;line-height:22px;font-size:13.5px;letter-spacing:-0.278px;">R3</div>
<svg class="r" style="left:1140.5px;top:236px" width="13" height="13" viewBox="0 0 13 13" fill="none" stroke="#1a1a1a" stroke-width="1.300" stroke-linecap="round" stroke-linejoin="round"><rect x="0.700" y="0.700" width="11.1" height="10.6" rx="2" fill="#fff"/><path d="M2.600 6l2.300 2.300 4.200-4.600" /></svg>
<div class="t" style="left:1221px;top:232.0px;height:22px;line-height:22px;font-size:13.5px;letter-spacing:0.008px;">Трудовые(СДР)</div>
<svg class="r" style="left:691px;top:258px" width="13" height="13" viewBox="0 0 13 13" fill="none" stroke="#1a1a1a" stroke-width="1.300" stroke-linecap="round" stroke-linejoin="round"><rect x="0.700" y="0.700" width="11.1" height="10.6" rx="2" fill="#fff"/></svg>
<div class="t" style="left:706px;top:254.0px;height:22px;line-height:22px;font-size:13.5px;width:51px;text-align:left;letter-spacing:-0.090px;">3.7-2-1</div>
<div class="t" style="left:758px;top:254.0px;height:22px;line-height:22px;font-size:13.5px;letter-spacing:0.029px;">Устройство просло…</div>
<div class="t" style="left:893px;top:254.0px;height:22px;line-height:22px;font-size:13.5px;letter-spacing:0.214px;">Разнорабочий</div>
<div class="t" style="left:991px;top:254.0px;height:22px;line-height:22px;font-size:13.5px;letter-spacing:-0.278px;">R1</div>
<svg class="r" style="left:1140.5px;top:258px" width="13" height="13" viewBox="0 0 13 13" fill="none" stroke="#1a1a1a" stroke-width="1.300" stroke-linecap="round" stroke-linejoin="round"><rect x="0.700" y="0.700" width="11.1" height="10.6" rx="2" fill="#fff"/><path d="M2.600 6l2.300 2.300 4.200-4.600" /></svg>
<div class="t" style="left:1221px;top:254.0px;height:22px;line-height:22px;font-size:13.5px;letter-spacing:0.008px;">Трудовые(СДР)</div>
<svg class="r" style="left:691px;top:280px" width="13" height="13" viewBox="0 0 13 13" fill="none" stroke="#1a1a1a" stroke-width="1.300" stroke-linecap="round" stroke-linejoin="round"><rect x="0.700" y="0.700" width="11.1" height="10.6" rx="2" fill="#fff"/></svg>
<div class="t" style="left:706px;top:276.0px;height:22px;line-height:22px;font-size:13.5px;width:51px;text-align:left;letter-spacing:-0.165px;">3.30-102-1</div>
<div class="t" style="left:758px;top:276.0px;height:22px;line-height:22px;font-size:13.5px;letter-spacing:0.025px;">Изготовление, уст…</div>
<div class="t" style="left:893px;top:276.0px;height:22px;line-height:22px;font-size:13.5px;letter-spacing:0.052px;">Сварщик</div>
<div class="t" style="left:991px;top:276.0px;height:22px;line-height:22px;font-size:13.5px;letter-spacing:-0.278px;">R5</div>
<svg class="r" style="left:1140.5px;top:280px" width="13" height="13" viewBox="0 0 13 13" fill="none" stroke="#1a1a1a" stroke-width="1.300" stroke-linecap="round" stroke-linejoin="round"><rect x="0.700" y="0.700" width="11.1" height="10.6" rx="2" fill="#fff"/><path d="M2.600 6l2.300 2.300 4.200-4.600" /></svg>
<div class="t" style="left:1221px;top:276.0px;height:22px;line-height:22px;font-size:13.5px;letter-spacing:0.008px;">Трудовые(СДР)</div>
<svg class="r" style="left:691px;top:302px" width="13" height="13" viewBox="0 0 13 13" fill="none" stroke="#1a1a1a" stroke-width="1.300" stroke-linecap="round" stroke-linejoin="round"><rect x="0.700" y="0.700" width="11.1" height="10.6" rx="2" fill="#fff"/></svg>
<div class="t" style="left:706px;top:298.0px;height:22px;line-height:22px;font-size:13.5px;width:51px;text-align:left;letter-spacing:-0.035px;">3.30-102-2</div>
<div class="t" style="left:758px;top:298.0px;height:22px;line-height:22px;font-size:13.5px;letter-spacing:-0.081px;">Устройство армату…</div>
<div class="t" style="left:893px;top:298.0px;height:22px;line-height:22px;font-size:13.5px;letter-spacing:-0.152px;">Электромонт…</div>
<div class="t" style="left:991px;top:298.0px;height:22px;line-height:22px;font-size:13.5px;letter-spacing:-0.278px;">R4</div>
<svg class="r" style="left:1140.5px;top:302px" width="13" height="13" viewBox="0 0 13 13" fill="none" stroke="#1a1a1a" stroke-width="1.300" stroke-linecap="round" stroke-linejoin="round"><rect x="0.700" y="0.700" width="11.1" height="10.6" rx="2" fill="#fff"/><path d="M2.600 6l2.300 2.300 4.200-4.600" /></svg>
<div class="t" style="left:1221px;top:298.0px;height:22px;line-height:22px;font-size:13.5px;letter-spacing:0.008px;">Трудовые(СДР)</div>
<svg class="r" style="left:691px;top:324px" width="13" height="13" viewBox="0 0 13 13" fill="none" stroke="#1a1a1a" stroke-width="1.300" stroke-linecap="round" stroke-linejoin="round"><rect x="0.700" y="0.700" width="11.1" height="10.6" rx="2" fill="#fff"/></svg>
<div class="t" style="left:706px;top:320.0px;height:22px;line-height:22px;font-size:13.5px;width:51px;text-align:left;letter-spacing:-0.035px;">3.30-102-3</div>
<div class="t" style="left:758px;top:320.0px;height:22px;line-height:22px;font-size:13.5px;letter-spacing:0.192px;">Бетонирование</div>
<div class="t" style="left:893px;top:320.0px;height:22px;line-height:22px;font-size:13.5px;letter-spacing:0.242px;">Бетонщик</div>
<div class="t" style="left:991px;top:320.0px;height:22px;line-height:22px;font-size:13.5px;letter-spacing:-0.278px;">R2</div>
<svg class="r" style="left:1140.5px;top:324px" width="13" height="13" viewBox="0 0 13 13" fill="none" stroke="#1a1a1a" stroke-width="1.300" stroke-linecap="round" stroke-linejoin="round"><rect x="0.700" y="0.700" width="11.1" height="10.6" rx="2" fill="#fff"/><path d="M2.600 6l2.300 2.300 4.200-4.600" /></svg>
<div class="t" style="left:1221px;top:320.0px;height:22px;line-height:22px;font-size:13.5px;letter-spacing:0.008px;">Трудовые(СДР)</div>
<svg class="r" style="left:691px;top:346px" width="13" height="13" viewBox="0 0 13 13" fill="none" stroke="#1a1a1a" stroke-width="1.300" stroke-linecap="round" stroke-linejoin="round"><rect x="0.700" y="0.700" width="11.1" height="10.6" rx="2" fill="#fff"/></svg>
<div class="t" style="left:706px;top:342.0px;height:22px;line-height:22px;font-size:13.5px;width:51px;text-align:left;letter-spacing:-0.086px;">3.30-70-1</div>
<div class="t" style="left:758px;top:342.0px;height:22px;line-height:22px;font-size:13.5px;letter-spacing:0.003px;">Окраска железобе…</div>
<div class="t" style="left:893px;top:342.0px;height:22px;line-height:22px;font-size:13.5px;letter-spacing:0.052px;">Сварщик</div>
<div class="t" style="left:991px;top:342.0px;height:22px;line-height:22px;font-size:13.5px;letter-spacing:-0.278px;">R5</div>
<svg class="r" style="left:1140.5px;top:346px" width="13" height="13" viewBox="0 0 13 13" fill="none" stroke="#1a1a1a" stroke-width="1.300" stroke-linecap="round" stroke-linejoin="round"><rect x="0.700" y="0.700" width="11.1" height="10.6" rx="2" fill="#fff"/><path d="M2.600 6l2.300 2.300 4.200-4.600" /></svg>
<div class="t" style="left:1221px;top:342.0px;height:22px;line-height:22px;font-size:13.5px;letter-spacing:0.008px;">Трудовые(СДР)</div>
<div class="r" style="left:1324.7px;top:25px;width:3px;height:441px;background:#cdcdd1;"></div>
<div class="r" style="left:1324.7px;top:95px;width:3px;height:48px;background:#b9b9be;"></div>
<div class="r" style="left:687px;top:464px;width:639px;height:1px;background:#d4d4d8;"></div>
<div class="r" style="left:1328.5px;top:24.3px;width:589.5px;height:24.7px;background:#ffffff;"></div>
<div class="t" style="left:1336.5px;top:26.6px;height:25px;line-height:25px;font-size:14.5px;letter-spacing:0.100px;">Виды работ</div>
<div class="r" style="left:1328.5px;top:49px;width:589.5px;height:1px;background:#b4b4b8;"></div>
<div class="r" style="left:1328.5px;top:50px;width:589.5px;height:44px;background:#f0f0f2;"></div>
<div class="r" style="left:1328.5px;top:94px;width:589.5px;height:1px;background:#b4b4b8;"></div>
<svg class="r" style="left:1827.6px;top:25px;stroke:#1a1a1a;stroke-width:1.900" width="20" height="24" viewBox="0 0 20 24" fill="none" stroke="#45454d" stroke-width="1.8" stroke-linecap="round" stroke-linejoin="round"><rect x="1.8" y="9" width="11" height="8.4" rx="1.6"/><path d="M4.8 6.4h9.6a2 2 0 0 1 2 2v6"/></svg>
<div class="r" style="left:1852.1px;top:43.2px;width:16.5px;height:1.6px;background:#1a1a1a;"></div>
<svg class="r" style="left:1874.6px;top:27px;stroke:#1a1a1a;stroke-width:1.800;stroke-linecap:butt;stroke-linejoin:miter" width="20" height="20" viewBox="0 0 20 20" fill="none" stroke="#45454d" stroke-width="1.8" stroke-linecap="round" stroke-linejoin="round"><path d="M2.5 17.5L17.5 2.5M11 2.5h6.5V9M2.5 11v6.5H9"/></svg>
<svg class="r" style="left:1898.6px;top:27px;stroke:#1a1a1a;stroke-width:1.800;stroke-linecap:butt" width="20" height="20" viewBox="0 0 20 20" fill="none" stroke="#45454d" stroke-width="1.8" stroke-linecap="round" stroke-linejoin="round"><path d="M2 2l16 16M18 2L2 18"/></svg>
<svg class="r" style="left:1337px;top:58px;" width="28" height="28" viewBox="0 0 28 28" fill="none" stroke="#45454d" stroke-width="1.8" stroke-linecap="round" stroke-linejoin="round"><path d="M13.89 11.46L15.61 10.09A3.70 3.70 0 0 0 10.99 4.31L3.99 9.91A3.70 3.70 0 0 0 8.61 15.69L11.11 13.69M3.21 16.04L1.49 17.41A3.70 3.70 0 0 0 6.11 23.19L13.01 17.59A3.70 3.70 0 0 0 8.39 11.81L5.89 13.81" stroke-width="2.400"/><path d="M17.300 18.300l3.200 7 3.300-7" stroke-width="1.300"/></svg>
<svg class="r" style="left:1381px;top:58px;" width="28" height="28" viewBox="0 0 28 28" fill="none" stroke="#45454d" stroke-width="1.8" stroke-linecap="round" stroke-linejoin="round"><path d="M13.89 11.46L15.61 10.09A3.70 3.70 0 0 0 10.99 4.31L3.99 9.91A3.70 3.70 0 0 0 8.61 15.69L11.11 13.69M3.21 16.04L1.49 17.41A3.70 3.70 0 0 0 6.11 23.19L13.01 17.59A3.70 3.70 0 0 0 8.39 11.81L5.89 13.81" stroke-width="2.400"/><g stroke-width="1.300"><circle cx="20.200" cy="21.800" r="3.200"/><path d="M18 24l4.400-4.400"/></g></svg>
<svg class="r" style="left:1425px;top:58px;" width="28" height="28" viewBox="0 0 28 28" fill="none" stroke="#45454d" stroke-width="1.8" stroke-linecap="round" stroke-linejoin="round"><path d="M13.89 11.46L15.61 10.09A3.70 3.70 0 0 0 10.99 4.31L3.99 9.91A3.70 3.70 0 0 0 8.61 15.69L11.11 13.69M3.21 16.04L1.49 17.41A3.70 3.70 0 0 0 6.11 23.19L13.01 17.59A3.70 3.70 0 0 0 8.39 11.81L5.89 13.81" stroke-width="2.400"/><path d="M17.300 18.300l3.200 7 3.300-7" stroke-width="1.300"/><path d="M19.500 4.700l2.700-2v7.800M19.400 10.500h5.300" stroke-width="1.400" stroke-linecap="butt"/></svg>
<svg class="r" style="left:1469px;top:58px;" width="28" height="28" viewBox="0 0 28 28" fill="none" stroke="#45454d" stroke-width="1.8" stroke-linecap="round" stroke-linejoin="round"><path d="M13.89 11.46L15.61 10.09A3.70 3.70 0 0 0 10.99 4.31L3.99 9.91A3.70 3.70 0 0 0 8.61 15.69L11.11 13.69M3.21 16.04L1.49 17.41A3.70 3.70 0 0 0 6.11 23.19L13.01 17.59A3.70 3.70 0 0 0 8.39 11.81L5.89 13.81" stroke-width="2.400"/><g stroke-width="1.300"><circle cx="20.200" cy="21.800" r="3.200"/><path d="M18 24l4.400-4.400"/></g><path d="M19.500 4.700l2.700-2v7.800M19.400 10.500h5.300" stroke-width="1.400" stroke-linecap="butt"/></svg>
<svg class="r" style="left:1513.5px;top:58.7px;stroke-width:1.700" width="28" height="28" viewBox="0 0 28 28" fill="none" stroke="#45454d" stroke-width="1.8" stroke-linecap="round" stroke-linejoin="round"><path d="M17 7.600c-1.800-.7-4.300-1.100-7-1.100-5.200 0-9.300 1.600-9.300 3.600s4.100 3.600 9.300 3.600c4.800 0 8.700-1.300 9.300-3"/><path d="M0.700 10.100v10.800c0 2 4.100 3.600 9.300 3.600s9.300-1.600 9.300-3.600V12M0.700 15.500c0 2 4.100 3.600 9.300 3.600s9.300-1.600 9.300-3.600"/><path d="M20.300 11.500V3.500M16.800 6.800l3.500-3.500 3.500 3.500" stroke-width="1.900"/></svg>
<svg class="r" style="left:1564.5px;top:69px" width="10" height="5" viewBox="0 0 10 5"><path d="M0 0h10L5 5z" fill="#6e6e78"/></svg>
<svg class="r" style="left:1536px;top:52px" width="104" height="44" viewBox="0 0 104 44"><path d="M12 22.300H70" stroke="#000" stroke-width="3.200"/><path d="M1.900 22.300l12-5.800v11.600z" fill="#000"/><ellipse cx="82.500" cy="22.400" rx="15.700" ry="17.400" fill="#fff" stroke="#000" stroke-width="3.200"/><text x="82.700" y="29.800" font-size="20" text-anchor="middle" fill="#000" font-family="DejaVu Sans,Liberation Sans,sans-serif">1</text></svg>
<div class="r" style="left:1756px;top:52.200px;width:160.500px;height:39.300px;border:1px solid #c3c3c9;border-radius:5px;box-sizing:border-box;background:#f0f0f2"></div>
<div class="t" style="left:1768px;top:57px;height:12px;line-height:12px;font-size:11px;color:#8c8c92;letter-spacing:-0.163px;">СДР</div>
<div class="t" style="left:1768px;top:69px;height:18px;line-height:18px;font-size:14.5px;letter-spacing:0.129px;">Трудовые(СДР)</div>
<svg class="r" style="left:1888px;top:70px" width="10" height="5" viewBox="0 0 10 5"><path d="M0 0h10L5 5z" fill="#45454d"/></svg>
<div class="t" style="left:1329px;top:95.9px;height:47px;line-height:47px;font-size:12.5px;font-weight:bold;color:#111;width:61px;text-align:center;letter-spacing:-0.954px;">Шифр</div>
<div class="r" style="left:1390px;top:95px;width:1px;height:47px;background:#c6c6cb;"></div>
<div class="t" style="left:1390px;top:95.9px;height:47px;line-height:47px;font-size:12.5px;font-weight:bold;color:#111;width:117px;text-align:center;letter-spacing:-0.350px;">Наименование</div>
<div class="r" style="left:1507px;top:95px;width:1px;height:47px;background:#c6c6cb;"></div>
<div class="t" style="left:1507px;top:95.9px;height:47px;line-height:47px;font-size:12.5px;font-weight:bold;color:#111;width:102px;text-align:center;letter-spacing:-0.260px;">Код ресурса</div>
<div class="r" style="left:1609px;top:95px;width:1px;height:47px;background:#c6c6cb;"></div>
<div class="t" style="left:1609px;top:95.9px;height:47px;line-height:47px;font-size:12.5px;font-weight:bold;color:#111;width:100px;text-align:center;letter-spacing:-0.296px;">Справочник</div>
<div class="r" style="left:1709px;top:95px;width:1px;height:47px;background:#c6c6cb;"></div>
<div class="t" style="left:1709px;top:95.9px;height:47px;line-height:47px;font-size:12.5px;font-weight:bold;color:#111;width:76px;text-align:center;letter-spacing:-0.290px;">Ед. изм.</div>
<div class="r" style="left:1785px;top:95px;width:1px;height:47px;background:#c6c6cb;"></div>
<div class="t" style="left:1785px;top:95.9px;height:47px;line-height:47px;font-size:12.5px;font-weight:bold;color:#111;width:119px;text-align:center;letter-spacing:-0.366px;">Интенсивность</div>
<div class="r" style="left:1904px;top:95px;width:1px;height:47px;background:#c6c6cb;"></div>
<div class="r" style="left:1329px;top:142px;width:589px;height:1px;background:#c4c4c8;"></div>
<div class="t" style="left:1336.5px;top:144.0px;height:22px;line-height:22px;font-size:13.5px;letter-spacing:-0.828px;">R1</div>
<div class="t" style="left:1390px;top:144.0px;height:22px;line-height:22px;font-size:13.5px;width:117px;text-align:center;letter-spacing:0.239px;">Разнорабочий</div>
<div class="t" style="left:1507px;top:144.0px;height:22px;line-height:22px;font-size:13.5px;width:102px;text-align:center;letter-spacing:-0.828px;">R1</div>
<div class="t" style="left:1609px;top:144.0px;height:22px;line-height:22px;font-size:13.5px;width:100px;text-align:center;letter-spacing:0.136px;">Трудовые</div>
<div class="t" style="left:1709px;top:144.0px;height:22px;line-height:22px;font-size:13.5px;width:76px;text-align:center;letter-spacing:0.250px;">чел/ч</div>
<div class="t" style="left:1785px;top:144.0px;height:22px;line-height:22px;font-size:13.5px;width:119px;text-align:center;">50</div>
<div class="r" style="left:1329px;top:165px;width:589px;height:22px;background:#fafafa;"></div>
<div class="t" style="left:1336.5px;top:166.0px;height:22px;line-height:22px;font-size:13.5px;letter-spacing:-0.828px;">R2</div>
<div class="t" style="left:1390px;top:166.0px;height:22px;line-height:22px;font-size:13.5px;width:117px;text-align:center;letter-spacing:0.242px;">Бетонщик</div>
<div class="t" style="left:1507px;top:166.0px;height:22px;line-height:22px;font-size:13.5px;width:102px;text-align:center;letter-spacing:-0.828px;">R2</div>
<div class="t" style="left:1609px;top:166.0px;height:22px;line-height:22px;font-size:13.5px;width:100px;text-align:center;letter-spacing:0.136px;">Трудовые</div>
<div class="t" style="left:1709px;top:166.0px;height:22px;line-height:22px;font-size:13.5px;width:76px;text-align:center;letter-spacing:0.250px;">чел/ч</div>
<div class="t" style="left:1785px;top:166.0px;height:22px;line-height:22px;font-size:13.5px;width:119px;text-align:center;">15</div>
<div class="t" style="left:1336.5px;top:188.0px;height:22px;line-height:22px;font-size:13.5px;letter-spacing:-0.828px;">R3</div>
<div class="t" style="left:1390px;top:188.0px;height:22px;line-height:22px;font-size:13.5px;width:117px;text-align:center;letter-spacing:0.354px;">Изолировщик</div>
<div class="t" style="left:1507px;top:188.0px;height:22px;line-height:22px;font-size:13.5px;width:102px;text-align:center;letter-spacing:-0.828px;">R3</div>
<div class="t" style="left:1609px;top:188.0px;height:22px;line-height:22px;font-size:13.5px;width:100px;text-align:center;letter-spacing:0.136px;">Трудовые</div>
<div class="t" style="left:1709px;top:188.0px;height:22px;line-height:22px;font-size:13.5px;width:76px;text-align:center;letter-spacing:0.250px;">чел/ч</div>
<div class="t" style="left:1785px;top:188.0px;height:22px;line-height:22px;font-size:13.5px;width:119px;text-align:center;">10</div>
<div class="r" style="left:1329px;top:209px;width:589px;height:22px;background:#ffffcc;"></div>
<div class="t" style="left:1336.5px;top:210.0px;height:22px;line-height:22px;font-size:13.5px;letter-spacing:-0.828px;">R4</div>
<div class="t" style="left:1390px;top:210.0px;height:22px;line-height:22px;font-size:13.5px;width:117px;text-align:center;letter-spacing:-0.015px;">Электромонтаж…</div>
<div class="t" style="left:1507px;top:210.0px;height:22px;line-height:22px;font-size:13.5px;width:102px;text-align:center;letter-spacing:-0.828px;">R4</div>
<div class="t" style="left:1609px;top:210.0px;height:22px;line-height:22px;font-size:13.5px;width:100px;text-align:center;letter-spacing:0.136px;">Трудовые</div>
<div class="t" style="left:1709px;top:210.0px;height:22px;line-height:22px;font-size:13.5px;width:76px;text-align:center;letter-spacing:0.250px;">чел/ч</div>
<div class="t" style="left:1785px;top:210.0px;height:22px;line-height:22px;font-size:13.5px;width:119px;text-align:center;">5</div>
<div class="t" style="left:1336.5px;top:232.0px;height:22px;line-height:22px;font-size:13.5px;letter-spacing:-0.828px;">R5</div>
<div class="t" style="left:1390px;top:232.0px;height:22px;line-height:22px;font-size:13.5px;width:117px;text-align:center;letter-spacing:0.052px;">Сварщик</div>
<div class="t" style="left:1507px;top:232.0px;height:22px;line-height:22px;font-size:13.5px;width:102px;text-align:center;letter-spacing:-0.828px;">R5</div>
<div class="t" style="left:1609px;top:232.0px;height:22px;line-height:22px;font-size:13.5px;width:100px;text-align:center;letter-spacing:0.136px;">Трудовые</div>
<div class="t" style="left:1709px;top:232.0px;height:22px;line-height:22px;font-size:13.5px;width:76px;text-align:center;letter-spacing:0.250px;">чел/ч</div>
<div class="t" style="left:1785px;top:232.0px;height:22px;line-height:22px;font-size:13.5px;width:119px;text-align:center;">5</div>
<div class="r" style="left:1329px;top:253px;width:589px;height:22px;background:#fafafa;"></div>
<div class="t" style="left:1336.5px;top:254.0px;height:22px;line-height:22px;font-size:13.5px;letter-spacing:-0.828px;">R6</div>
<div class="t" style="left:1390px;top:254.0px;height:22px;line-height:22px;font-size:13.5px;width:117px;text-align:center;letter-spacing:0.352px;">Монтажник</div>
<div class="t" style="left:1507px;top:254.0px;height:22px;line-height:22px;font-size:13.5px;width:102px;text-align:center;letter-spacing:-0.828px;">R6</div>
<div class="t" style="left:1609px;top:254.0px;height:22px;line-height:22px;font-size:13.5px;width:100px;text-align:center;letter-spacing:0.136px;">Трудовые</div>
<div class="t" style="left:1709px;top:254.0px;height:22px;line-height:22px;font-size:13.5px;width:76px;text-align:center;letter-spacing:0.250px;">чел/ч</div>
<div class="t" style="left:1785px;top:254.0px;height:22px;line-height:22px;font-size:13.5px;width:119px;text-align:center;">7</div>
<div class="r" style="left:1329px;top:454px;width:589px;height:11px;background:#f4f4f6;"></div>
<div class="r" style="left:1329px;top:455px;width:348px;height:10px;background:#dcdcde;border-radius:5px"></div>
<div class="r" style="left:46px;top:465.7px;width:1872px;height:2.4px;background:#c6c6ca;"></div>
<div class="r" style="left:46px;top:468.3px;width:881px;height:24.7px;background:#f0f0f2;"></div>
<div class="t" style="left:54px;top:469.9px;height:25px;line-height:25px;font-size:14.5px;letter-spacing:0.255px;">Объединенная смета контракта</div>
<div class="r" style="left:46px;top:493px;width:881px;height:1px;background:#b4b4b8;"></div>
<div class="r" style="left:46px;top:494px;width:881px;height:44px;background:#f0f0f2;"></div>
<div class="r" style="left:46px;top:538px;width:881px;height:1px;background:#b4b4b8;"></div>
<svg class="r" style="left:835.3px;top:469px;stroke:#1a1a1a;stroke-width:1.900" width="20" height="24" viewBox="0 0 20 24" fill="none" stroke="#45454d" stroke-width="1.8" stroke-linecap="round" stroke-linejoin="round"><rect x="1.8" y="9" width="11" height="8.4" rx="1.6"/><path d="M4.8 6.4h9.6a2 2 0 0 1 2 2v6"/></svg>
<div class="r" style="left:859.8px;top:487.2px;width:16.5px;height:1.6px;background:#1a1a1a;"></div>
<svg class="r" style="left:882.3px;top:471px;stroke:#1a1a1a;stroke-width:1.800;stroke-linecap:butt;stroke-linejoin:miter" width="20" height="20" viewBox="0 0 20 20" fill="none" stroke="#45454d" stroke-width="1.8" stroke-linecap="round" stroke-linejoin="round"><path d="M2.5 17.5L17.5 2.5M11 2.5h6.5V9M2.5 11v6.5H9"/></svg>
<svg class="r" style="left:906.3px;top:471px;stroke:#1a1a1a;stroke-width:1.800;stroke-linecap:butt" width="20" height="20" viewBox="0 0 20 20" fill="none" stroke="#45454d" stroke-width="1.8" stroke-linecap="round" stroke-linejoin="round"><path d="M2 2l16 16M18 2L2 18"/></svg>
<svg class="r" style="left:55px;top:502px;" width="28" height="28" viewBox="0 0 28 28" fill="none" stroke="#45454d" stroke-width="1.8" stroke-linecap="round" stroke-linejoin="round"><path d="M1 13.500h15.500M10.500 7l6.500 6.500-6.500 6.500"/><path d="M14.500 2h7a2 2 0 0 1 2 2v19a2 2 0 0 1-2 2h-7"/></svg>
<svg class="r" style="left:100px;top:502px;" width="28" height="28" viewBox="0 0 28 28" fill="none" stroke="#45454d" stroke-width="1.8" stroke-linecap="round" stroke-linejoin="round"><path d="M2.300 5.600h13.400a1.300 1.300 0 0 1 1 2.100L11.800 13.800v6.400a1.200 1.200 0 0 1-1.800 1l-2.400-1.300a1.300 1.300 0 0 1-.7-1.100v-5L1.300 7.700a1.300 1.300 0 0 1 1-2.100z"/><path d="M15.300 11.300h8.400M15.300 15.900h8.400M15.300 20.500h8.400"/></svg>
<svg class="r" style="left:145px;top:502px;" width="28" height="28" viewBox="0 0 28 28" fill="none" stroke="#45454d" stroke-width="1.8" stroke-linecap="round" stroke-linejoin="round"><path d="M12.500 5.900H3.200a2.200 2.200 0 0 0-2.200 2.200v14.600a2.200 2.200 0 0 0 2.200 2.200h14.600a2.200 2.200 0 0 0 2.200-2.200V11"/><path d="M5.500 15.300l4 4 7-7.500"/><path d="M14.500 4.300l2.200 2.200 4.500-4.800" stroke-width="1.400"/></svg>
<svg class="r" style="left:189px;top:502px;" width="28" height="28" viewBox="0 0 28 28" fill="none" stroke="#45454d" stroke-width="1.8" stroke-linecap="round" stroke-linejoin="round"><path d="M12.500 5.900H3.200a2.200 2.200 0 0 0-2.200 2.200v14.600a2.200 2.200 0 0 0 2.200 2.200h14.600a2.200 2.200 0 0 0 2.200-2.200V11"/><path d="M5.500 15.300l4 4 7-7.500"/><path d="M16.700 2.300l4.500 4.500M21.200 2.300l-4.500 4.500" stroke-width="1.400"/></svg>
<svg class="r" style="left:232.4px;top:502px;stroke:#c9c9cd;stroke-width:1.900" width="28" height="28" viewBox="0 0 28 28" fill="none" stroke="#45454d" stroke-width="1.8" stroke-linecap="round" stroke-linejoin="round"><path d="M1 14.800l10.300 10.400M11.300 14.800L1 25.200"/><path d="M13.500 2.400h10.300l-3.900 4.800v4.600l-2.500-1.300V7.200z" stroke-width="1.500"/></svg>
<svg class="r" style="left:276px;top:502px;" width="28" height="28" viewBox="0 0 28 28" fill="none" stroke="#45454d" stroke-width="1.8" stroke-linecap="round" stroke-linejoin="round"><path d="M7.500 25V10M1 16l6.500-6.500L14 16"/><path d="M9 3.500h7M13.500 7.500h7M17 11.500h7"/></svg>
<svg class="r" style="left:324px;top:502px;" width="28" height="28" viewBox="0 0 28 28" fill="none" stroke="#45454d" stroke-width="1.8" stroke-linecap="round" stroke-linejoin="round"><path d="M8 17V3M1.500 9.500L8 3l6.500 6.500M0.800 25.200h14.400"/></svg>
<svg class="r" style="left:365px;top:502px;" width="28" height="28" viewBox="0 0 28 28" fill="none" stroke="#45454d" stroke-width="1.8" stroke-linecap="round" stroke-linejoin="round"><path d="M0.800 5.300h21.300" stroke-width="2.100"/><path d="M5.300 5c.8-4.900 11.300-4.900 12.100 0z" fill="#45454d" stroke="none"/><path d="M3.200 8.700h16.100v13.900a3 3 0 0 1-3 3H6.200a3 3 0 0 1-3-3z" fill="#4a4a52" stroke="none"/><path d="M12.45 16.06L13.46 15.25A2.18 2.18 0 0 0 10.73 11.84L6.60 15.15A2.18 2.18 0 0 0 9.33 18.56L10.80 17.38M6.14 18.76L5.13 19.57A2.18 2.18 0 0 0 7.86 22.98L11.93 19.68A2.18 2.18 0 0 0 9.20 16.27L7.73 17.45" stroke="#e6e6ea" stroke-width="1.300"/><path d="M15.900 12l1.200-.9v4.700" stroke="#e6e6ea" stroke-width="1"/></svg>
<svg class="r" style="left:415px;top:513px" width="10" height="5" viewBox="0 0 10 5"><path d="M0 0h10L5 5z" fill="#c9c9cd"/></svg>
<svg class="r" style="left:895px;top:503px" width="28" height="28" viewBox="0 0 28 28" fill="#f0f0f2" stroke="#1976d2" stroke-width="2.100"><circle cx="9" cy="8.500" r="6.800"/><circle cx="17.500" cy="17" r="6.800"/><text x="9" y="10.800" font-size="6.500" font-weight="bold" text-anchor="middle" fill="#1976d2" stroke="none" font-family="Liberation Sans,sans-serif">8</text><text x="17.500" y="19.300" font-size="6.500" font-weight="bold" text-anchor="middle" fill="#1976d2" stroke="none" font-family="Liberation Sans,sans-serif">15</text></svg>
<div class="t" style="left:47px;top:539.9px;height:50px;line-height:50px;font-size:12.5px;font-weight:bold;color:#111;width:104.5px;text-align:center;letter-spacing:-0.211px;">Тип расценки</div>
<div class="r" style="left:151px;top:539px;width:1px;height:50px;background:#c6c6cb;"></div>
<div class="t" style="left:151.5px;top:539.9px;height:50px;line-height:50px;font-size:12.5px;font-weight:bold;color:#111;width:111.0px;text-align:center;letter-spacing:-0.512px;">Номер докумен…</div>
<div class="r" style="left:262px;top:539px;width:1px;height:50px;background:#c6c6cb;"></div>
<div class="t" style="left:262.5px;top:539.9px;height:50px;line-height:50px;font-size:12.5px;font-weight:bold;color:#111;width:138.5px;text-align:center;letter-spacing:-0.444px;">Шифр документа</div>
<div class="r" style="left:401px;top:539px;width:1px;height:50px;background:#c6c6cb;"></div>
<div class="t" style="left:401px;top:539.9px;height:50px;line-height:50px;font-size:12.5px;font-weight:bold;color:#111;width:59px;text-align:center;letter-spacing:-0.147px;">Код ЕР</div>
<div class="r" style="left:460px;top:539px;width:1px;height:50px;background:#c6c6cb;"></div>
<div class="t" style="left:460px;top:539.9px;height:50px;line-height:50px;font-size:12.5px;font-weight:bold;color:#111;width:65px;text-align:center;letter-spacing:-0.758px;">Номер …</div>
<div class="r" style="left:525px;top:539px;width:1px;height:50px;background:#c6c6cb;"></div>
<div class="t" style="left:525px;top:539.9px;height:50px;line-height:50px;font-size:12.5px;font-weight:bold;color:#111;width:341.5px;text-align:center;letter-spacing:-0.317px;">Наименование</div>
<div class="r" style="left:866px;top:539px;width:1px;height:50px;background:#c6c6cb;"></div>
<div class="t" style="left:866.5px;top:539.9px;height:50px;line-height:50px;font-size:12.5px;font-weight:bold;color:#111;width:53.5px;text-align:center;letter-spacing:-0.296px;">Ед.изм</div>
<div class="r" style="left:920px;top:539px;width:1px;height:50px;background:#c6c6cb;"></div>
<div class="r" style="left:47px;top:589px;width:880px;height:1px;background:#c4c4c8;"></div>
<div class="r" style="left:47px;top:589px;width:880px;height:308px;overflow:hidden">
<div class="r" style="left:0px;top:0px;width:869px;height:24px;background:#e8f5e9;"></div>
<svg class="r" style="left:3px;top:4.7px" width="13" height="13" viewBox="0 0 13 13" fill="none" stroke="#1a1a1a" stroke-width="1.300" stroke-linecap="round" stroke-linejoin="round"><rect x="0.700" y="0.700" width="11.299999999999999" height="10.799999999999999" rx="2" fill="#fff"/></svg>
<svg class="r" style="left:41.4px;top:6.9px" width="13" height="13" viewBox="0 0 13 13" fill="#4a4a52" stroke="#4a4a52" stroke-width=".5" stroke-linejoin="round"><circle cx="6.400" cy="1.500" r="1.150"/><path d="M2.300 3.900l3.500-1 1.500 1 1.200 2.400-.8.500-1.400-1.500-.8 2.300 1.400 1.500.2 2.900H6.300l-.3-2.400-1.500-1.300-1.500 3.700H1.700l1.800-5.600.4-1.400-.9.400-.6 2-.9-.3.800-2.700z"/><path d="M6.800 12.300l2.600-4.200 2.900 4.200z"/><path d="M3.600 4.600l5.600 5-.5.500-5.600-5z" stroke="none"/></svg>
<div class="t" style="left:105px;top:0.9px;height:24px;line-height:24px;font-size:13.5px;letter-spacing:0.301px;">02-02/2-01</div>
<div class="t" style="left:344px;top:0.9px;height:24px;line-height:24px;font-size:13.5px;width:79px;text-align:center;letter-spacing:0.114px;">3.30-64-3</div>
<div class="t" style="left:413px;top:0.9px;height:24px;line-height:24px;font-size:13.5px;width:65px;text-align:center;letter-spacing:-0.257px;">27</div>
<div class="t" style="left:479px;top:0.9px;height:24px;line-height:24px;font-size:13.5px;letter-spacing:0.215px;">Устройство гидроизоляции обмазочной битумной …</div>
<div class="t" style="left:820px;top:0.9px;height:24px;line-height:24px;font-size:13.5px;width:49px;text-align:left;letter-spacing:0.485px;">100 м2…</div>
<div class="r" style="left:0px;top:24px;width:869px;height:24px;background:#7cb9ee;"></div>
<svg class="r" style="left:3px;top:28.5px" width="14" height="14" viewBox="0 0 14 14" fill="none" stroke="#4a4a52" stroke-width="1.100" stroke-linecap="round"><path d="M6.95 5.08L7.81 4.39A1.85 1.85 0 0 0 5.49 1.51L1.99 4.31A1.85 1.85 0 0 0 4.31 7.19L5.56 6.20M1.60 7.37L0.74 8.06A1.85 1.85 0 0 0 3.06 10.94L6.51 8.14A1.85 1.85 0 0 0 4.19 5.26L2.94 6.25"/><path d="M9.600 1.400l1-.8v4.300M9.400 4.900h2.400" stroke-width=".8"/></svg>
<svg class="r" style="left:20px;top:27.8px" width="13" height="13" viewBox="0 0 13 13" fill="none" stroke="#4a4a52" stroke-width="1.150" stroke-linecap="round" stroke-linejoin="round"><circle cx="6.500" cy="6.500" r="5.500"/><path d="M4.300 4.500l2.200 4.600 2.200-4.600"/></svg>
<svg class="r" style="left:51.4px;top:30.8px" width="13" height="13" viewBox="0 0 13 13" fill="#4a4a52" stroke="#4a4a52" stroke-width=".5" stroke-linejoin="round"><circle cx="6.400" cy="1.500" r="1.150"/><path d="M2.300 3.900l3.500-1 1.500 1 1.200 2.400-.8.500-1.400-1.500-.8 2.300 1.400 1.500.2 2.900H6.300l-.3-2.400-1.500-1.300-1.500 3.700H1.700l1.800-5.600.4-1.400-.9.400-.6 2-.9-.3.800-2.700z"/><path d="M6.800 12.300l2.600-4.200 2.900 4.200z"/><path d="M3.600 4.600l5.600 5-.5.500-5.600-5z" stroke="none"/></svg>
<div class="t" style="left:105px;top:24.9px;height:24px;line-height:24px;font-size:13.5px;letter-spacing:0.301px;">02-02/2-01</div>
<div class="t" style="left:344px;top:24.9px;height:24px;line-height:24px;font-size:13.5px;width:79px;text-align:center;letter-spacing:-0.086px;">3.30-70-1</div>
<div class="t" style="left:413px;top:24.9px;height:24px;line-height:24px;font-size:13.5px;width:65px;text-align:center;letter-spacing:-0.257px;">28</div>
<div class="t" style="left:479px;top:24.9px;height:24px;line-height:24px;font-size:13.5px;letter-spacing:0.189px;">Окраска железобетонных пролетных строений мо…</div>
<div class="t" style="left:820px;top:24.9px;height:24px;line-height:24px;font-size:13.5px;width:49px;text-align:left;letter-spacing:0.485px;">100 м2…</div>
<div class="r" style="left:0px;top:48px;width:869px;height:24px;background:#ffecc0;"></div>
<svg class="r" style="left:3px;top:52.2px" width="13" height="13" viewBox="0 0 13 13" fill="none" stroke="#4a4a52" stroke-width="1.100" stroke-linecap="round"><path d="M0.600 1.300h11.600" stroke-width="1.600"/><path d="M12 1.800L1 11.800M6.800 11.300h5.200M2.200 4.800h4.500M4.800 4.800L3.200 9.500"/></svg>
<div class="t" style="left:105px;top:48.9px;height:24px;line-height:24px;font-size:13.5px;letter-spacing:0.301px;">02-02/2-01</div>
<div class="t" style="left:344px;top:48.9px;height:24px;line-height:24px;font-size:13.5px;width:79px;text-align:center;letter-spacing:-0.464px;">1.1-1-413</div>
<div class="t" style="left:413px;top:48.9px;height:24px;line-height:24px;font-size:13.5px;width:65px;text-align:center;letter-spacing:-0.257px;">29</div>
<div class="t" style="left:479px;top:48.9px;height:24px;line-height:24px;font-size:13.5px;letter-spacing:0.145px;">Композиция (краска) органосиликатная, марка ОС…</div>
<div class="t" style="left:820px;top:48.9px;height:24px;line-height:24px;font-size:13.5px;width:53px;text-align:center;">кг</div>
<div class="r" style="left:0px;top:72px;width:869px;height:24px;background:#ffecc0;"></div>
<svg class="r" style="left:3px;top:76.2px" width="13" height="13" viewBox="0 0 13 13" fill="none" stroke="#4a4a52" stroke-width="1.100" stroke-linecap="round"><path d="M0.600 1.300h11.600" stroke-width="1.600"/><path d="M12 1.800L1 11.800M6.800 11.300h5.200M2.200 4.800h4.500M4.800 4.800L3.200 9.500"/></svg>
<div class="t" style="left:105px;top:72.9px;height:24px;line-height:24px;font-size:13.5px;letter-spacing:0.301px;">02-02/2-01</div>
<div class="t" style="left:344px;top:72.9px;height:24px;line-height:24px;font-size:13.5px;width:79px;text-align:center;letter-spacing:-0.464px;">1.1-1-416</div>
<div class="t" style="left:413px;top:72.9px;height:24px;line-height:24px;font-size:13.5px;width:65px;text-align:center;letter-spacing:-0.257px;">30</div>
<div class="t" style="left:479px;top:72.9px;height:24px;line-height:24px;font-size:13.5px;letter-spacing:0.194px;">Композиция (краска), полимерная "Элад"</div>
<div class="t" style="left:820px;top:72.9px;height:24px;line-height:24px;font-size:13.5px;width:53px;text-align:center;">кг</div>
<div class="r" style="left:0px;top:96px;width:869px;height:24px;background:#ef9a9a;"></div>
<svg class="r" style="left:3px;top:100.7px" width="13" height="13" viewBox="0 0 13 13" fill="none" stroke="#1a1a1a" stroke-width="1.300" stroke-linecap="round" stroke-linejoin="round"><rect x="0.700" y="0.700" width="11.299999999999999" height="10.799999999999999" rx="2" fill="#ef9a9a"/></svg>
<svg class="r" style="left:41.4px;top:102.9px" width="13" height="13" viewBox="0 0 13 13" fill="#4a4a52" stroke="#4a4a52" stroke-width=".5" stroke-linejoin="round"><circle cx="6.400" cy="1.500" r="1.150"/><path d="M2.300 3.900l3.500-1 1.500 1 1.200 2.400-.8.500-1.400-1.500-.8 2.300 1.400 1.500.2 2.900H6.300l-.3-2.400-1.500-1.300-1.500 3.700H1.700l1.800-5.600.4-1.400-.9.400-.6 2-.9-.3.800-2.700z"/><path d="M6.800 12.300l2.600-4.200 2.900 4.200z"/><path d="M3.600 4.600l5.600 5-.5.500-5.600-5z" stroke="none"/></svg>
<div class="t" style="left:105px;top:96.9px;height:24px;line-height:24px;font-size:13.5px;letter-spacing:0.301px;">02-02/2-01</div>
<div class="t" style="left:344px;top:96.9px;height:24px;line-height:24px;font-size:13.5px;width:79px;text-align:center;letter-spacing:0.058px;">3.30-70-2</div>
<div class="t" style="left:413px;top:96.9px;height:24px;line-height:24px;font-size:13.5px;width:65px;text-align:center;letter-spacing:-0.257px;">31</div>
<div class="t" style="left:479px;top:96.9px;height:24px;line-height:24px;font-size:13.5px;letter-spacing:0.332px;">Устройство подмостей для окраски</div>
<div class="t" style="left:820px;top:96.9px;height:24px;line-height:24px;font-size:13.5px;width:49px;text-align:left;letter-spacing:0.485px;">100 м2…</div>
<div class="r" style="left:0px;top:120px;width:869px;height:24px;background:#ef9a9a;"></div>
<svg class="r" style="left:3px;top:124.7px" width="13" height="13" viewBox="0 0 13 13" fill="none" stroke="#1a1a1a" stroke-width="1.300" stroke-linecap="round" stroke-linejoin="round"><rect x="0.700" y="0.700" width="11.299999999999999" height="10.799999999999999" rx="2" fill="#ef9a9a"/></svg>
<svg class="r" style="left:41.4px;top:126.9px" width="13" height="13" viewBox="0 0 13 13" fill="#4a4a52" stroke="#4a4a52" stroke-width=".5" stroke-linejoin="round"><circle cx="6.400" cy="1.500" r="1.150"/><path d="M2.300 3.900l3.500-1 1.500 1 1.200 2.400-.8.500-1.400-1.500-.8 2.300 1.400 1.500.2 2.900H6.300l-.3-2.400-1.500-1.300-1.500 3.700H1.700l1.800-5.600.4-1.400-.9.400-.6 2-.9-.3.800-2.700z"/><path d="M6.800 12.300l2.600-4.200 2.900 4.200z"/><path d="M3.600 4.600l5.600 5-.5.500-5.600-5z" stroke="none"/></svg>
<div class="t" style="left:105px;top:120.9px;height:24px;line-height:24px;font-size:13.5px;letter-spacing:0.301px;">02-02/2-01</div>
<div class="t" style="left:344px;top:120.9px;height:24px;line-height:24px;font-size:13.5px;width:79px;text-align:center;letter-spacing:-0.299px;">3.15-16…</div>
<div class="t" style="left:413px;top:120.9px;height:24px;line-height:24px;font-size:13.5px;width:65px;text-align:center;letter-spacing:-0.257px;">32</div>
<div class="t" style="left:479px;top:120.9px;height:24px;line-height:24px;font-size:13.5px;letter-spacing:0.025px;">Нанесение антивандального покрытия типа Графф…</div>
<div class="t" style="left:820px;top:120.9px;height:24px;line-height:24px;font-size:13.5px;width:49px;text-align:left;letter-spacing:0.485px;">100 м2…</div>
<div class="r" style="left:0px;top:144px;width:869px;height:24px;background:#7cb9ee;"></div>
<svg class="r" style="left:3px;top:148.5px" width="14" height="14" viewBox="0 0 14 14" fill="none" stroke="#4a4a52" stroke-width="1.100" stroke-linecap="round"><path d="M6.95 5.08L7.81 4.39A1.85 1.85 0 0 0 5.49 1.51L1.99 4.31A1.85 1.85 0 0 0 4.31 7.19L5.56 6.20M1.60 7.37L0.74 8.06A1.85 1.85 0 0 0 3.06 10.94L6.51 8.14A1.85 1.85 0 0 0 4.19 5.26L2.94 6.25"/><path d="M9.600 1.400l1-.8v4.300M9.400 4.900h2.400" stroke-width=".8"/></svg>
<svg class="r" style="left:20px;top:147.8px" width="13" height="13" viewBox="0 0 13 13" fill="none" stroke="#4a4a52" stroke-width="1.150" stroke-linecap="round" stroke-linejoin="round"><circle cx="6.500" cy="6.500" r="5.500"/><path d="M4.300 4.500l2.200 4.600 2.200-4.600"/></svg>
<svg class="r" style="left:51.4px;top:150.8px" width="13" height="13" viewBox="0 0 13 13" fill="#4a4a52" stroke="#4a4a52" stroke-width=".5" stroke-linejoin="round"><circle cx="6.400" cy="1.500" r="1.150"/><path d="M2.300 3.900l3.500-1 1.500 1 1.200 2.400-.8.500-1.400-1.500-.8 2.300 1.400 1.500.2 2.900H6.300l-.3-2.400-1.500-1.300-1.500 3.700H1.700l1.800-5.600.4-1.400-.9.400-.6 2-.9-.3.800-2.700z"/><path d="M6.800 12.300l2.600-4.200 2.900 4.200z"/><path d="M3.600 4.600l5.600 5-.5.500-5.600-5z" stroke="none"/></svg>
<div class="t" style="left:105px;top:144.9px;height:24px;line-height:24px;font-size:13.5px;letter-spacing:0.301px;">02-02/2-01</div>
<div class="t" style="left:344px;top:144.9px;height:24px;line-height:24px;font-size:13.5px;width:79px;text-align:center;letter-spacing:0.167px;">3.5-2-6</div>
<div class="t" style="left:413px;top:144.9px;height:24px;line-height:24px;font-size:13.5px;width:65px;text-align:center;letter-spacing:-0.257px;">33</div>
<div class="t" style="left:479px;top:144.9px;height:24px;line-height:24px;font-size:13.5px;letter-spacing:0.189px;">Погружение дизель-молотом на гусеничном копре…</div>
<div class="t" style="left:820px;top:144.9px;height:24px;line-height:24px;font-size:13.5px;width:49px;text-align:left;letter-spacing:0.446px;">1 м3 с…</div>
<div class="r" style="left:0px;top:168px;width:869px;height:24px;background:#ffecc0;"></div>
<svg class="r" style="left:3px;top:172.2px" width="13" height="13" viewBox="0 0 13 13" fill="none" stroke="#4a4a52" stroke-width="1.100" stroke-linecap="round"><path d="M0.600 1.300h11.600" stroke-width="1.600"/><path d="M12 1.800L1 11.800M6.800 11.300h5.200M2.200 4.800h4.500M4.800 4.800L3.200 9.500"/></svg>
<div class="t" style="left:105px;top:168.9px;height:24px;line-height:24px;font-size:13.5px;letter-spacing:0.301px;">02-02/2-01</div>
<div class="t" style="left:344px;top:168.9px;height:24px;line-height:24px;font-size:13.5px;width:79px;text-align:center;letter-spacing:-0.319px;">1.5-3-118</div>
<div class="t" style="left:413px;top:168.9px;height:24px;line-height:24px;font-size:13.5px;width:65px;text-align:center;letter-spacing:-0.257px;">34</div>
<div class="t" style="left:479px;top:168.9px;height:24px;line-height:24px;font-size:13.5px;letter-spacing:-0.010px;">Сваи для мостов, марка С13-35Т4, расход арматур…</div>
<div class="t" style="left:820px;top:168.9px;height:24px;line-height:24px;font-size:13.5px;width:53px;text-align:center;">м3</div>
<div class="r" style="left:0px;top:192px;width:869px;height:24px;background:#e8f5e9;"></div>
<svg class="r" style="left:3px;top:196.7px" width="13" height="13" viewBox="0 0 13 13" fill="none" stroke="#1a1a1a" stroke-width="1.300" stroke-linecap="round" stroke-linejoin="round"><rect x="0.700" y="0.700" width="11.299999999999999" height="10.799999999999999" rx="2" fill="#fff"/></svg>
<svg class="r" style="left:41.4px;top:198.9px" width="13" height="13" viewBox="0 0 13 13" fill="#4a4a52" stroke="#4a4a52" stroke-width=".5" stroke-linejoin="round"><circle cx="6.400" cy="1.500" r="1.150"/><path d="M2.300 3.900l3.500-1 1.500 1 1.200 2.400-.8.500-1.400-1.500-.8 2.300 1.400 1.500.2 2.900H6.300l-.3-2.400-1.500-1.300-1.500 3.700H1.700l1.800-5.600.4-1.400-.9.400-.6 2-.9-.3.800-2.700z"/><path d="M6.800 12.300l2.600-4.200 2.900 4.200z"/><path d="M3.600 4.600l5.600 5-.5.500-5.600-5z" stroke="none"/></svg>
<div class="t" style="left:105px;top:192.9px;height:24px;line-height:24px;font-size:13.5px;letter-spacing:0.301px;">02-02/2-01</div>
<div class="t" style="left:344px;top:192.9px;height:24px;line-height:24px;font-size:13.5px;width:79px;text-align:center;letter-spacing:-0.031px;">3.30-13-2</div>
<div class="t" style="left:413px;top:192.9px;height:24px;line-height:24px;font-size:13.5px;width:65px;text-align:center;letter-spacing:-0.257px;">35</div>
<div class="t" style="left:479px;top:192.9px;height:24px;line-height:24px;font-size:13.5px;letter-spacing:0.195px;">Разборка кладки железобетонной опор мостов и т…</div>
<div class="t" style="left:820px;top:192.9px;height:24px;line-height:24px;font-size:13.5px;width:49px;text-align:left;letter-spacing:0.485px;">100 м3…</div>
<div class="r" style="left:0px;top:216px;width:869px;height:24px;background:#7cb9ee;"></div>
<svg class="r" style="left:3px;top:220.5px" width="14" height="14" viewBox="0 0 14 14" fill="none" stroke="#4a4a52" stroke-width="1.100" stroke-linecap="round"><path d="M6.95 5.08L7.81 4.39A1.85 1.85 0 0 0 5.49 1.51L1.99 4.31A1.85 1.85 0 0 0 4.31 7.19L5.56 6.20M1.60 7.37L0.74 8.06A1.85 1.85 0 0 0 3.06 10.94L6.51 8.14A1.85 1.85 0 0 0 4.19 5.26L2.94 6.25"/><path d="M9.600 1.400l1-.8v4.300M9.400 4.900h2.400" stroke-width=".8"/></svg>
<svg class="r" style="left:20px;top:219.8px" width="13" height="13" viewBox="0 0 13 13" fill="none" stroke="#4a4a52" stroke-width="1.150" stroke-linecap="round" stroke-linejoin="round"><circle cx="6.500" cy="6.500" r="5.500"/><path d="M2.800 10.200l7.400-7.400"/></svg>
<svg class="r" style="left:51.4px;top:222.8px" width="13" height="13" viewBox="0 0 13 13" fill="#4a4a52" stroke="#4a4a52" stroke-width=".5" stroke-linejoin="round"><circle cx="6.400" cy="1.500" r="1.150"/><path d="M2.300 3.900l3.500-1 1.500 1 1.200 2.400-.8.500-1.400-1.500-.8 2.300 1.400 1.500.2 2.900H6.300l-.3-2.400-1.500-1.300-1.500 3.700H1.700l1.800-5.600.4-1.400-.9.400-.6 2-.9-.3.800-2.700z"/><path d="M6.800 12.300l2.600-4.200 2.900 4.200z"/><path d="M3.600 4.600l5.600 5-.5.500-5.600-5z" stroke="none"/></svg>
<div class="t" style="left:105px;top:216.9px;height:24px;line-height:24px;font-size:13.5px;letter-spacing:0.301px;">02-02/2-01</div>
<div class="t" style="left:344px;top:216.9px;height:24px;line-height:24px;font-size:13.5px;width:79px;text-align:center;letter-spacing:-0.175px;">6.68-13-1</div>
<div class="t" style="left:413px;top:216.9px;height:24px;line-height:24px;font-size:13.5px;width:65px;text-align:center;letter-spacing:-0.257px;">36</div>
<div class="t" style="left:479px;top:216.9px;height:24px;line-height:24px;font-size:13.5px;letter-spacing:0.201px;">Механизированная погрузка строительного мусор…</div>
<div class="t" style="left:820px;top:216.9px;height:24px;line-height:24px;font-size:13.5px;width:53px;text-align:center;">1 т</div>
<div class="r" style="left:0px;top:240px;width:869px;height:24px;background:#ffecc0;"></div>
<svg class="r" style="left:3px;top:244.2px" width="13" height="13" viewBox="0 0 13 13" fill="none" stroke="#4a4a52" stroke-width="1.100" stroke-linecap="round"><path d="M0.600 1.300h11.600" stroke-width="1.600"/><path d="M12 1.800L1 11.800M6.800 11.300h5.200M2.200 4.800h4.500M4.800 4.800L3.200 9.500"/></svg>
<div class="t" style="left:105px;top:240.9px;height:24px;line-height:24px;font-size:13.5px;letter-spacing:0.301px;">02-02/2-01</div>
<div class="t" style="left:344px;top:240.9px;height:24px;line-height:24px;font-size:13.5px;width:79px;text-align:center;letter-spacing:-0.137px;">15.2-26…</div>
<div class="t" style="left:413px;top:240.9px;height:24px;line-height:24px;font-size:13.5px;width:65px;text-align:center;letter-spacing:-0.257px;">37</div>
<div class="t" style="left:479px;top:240.9px;height:24px;line-height:24px;font-size:13.5px;letter-spacing:0.147px;">Перевозка строительного мусора на расстояние д…</div>
<div class="t" style="left:820px;top:240.9px;height:24px;line-height:24px;font-size:13.5px;width:53px;text-align:center;">т</div>
<div class="r" style="left:0px;top:264px;width:869px;height:24px;background:#e8f5e9;"></div>
<svg class="r" style="left:3px;top:268.7px" width="13" height="13" viewBox="0 0 13 13" fill="none" stroke="#1a1a1a" stroke-width="1.300" stroke-linecap="round" stroke-linejoin="round"><rect x="0.700" y="0.700" width="11.299999999999999" height="10.799999999999999" rx="2" fill="#fff"/></svg>
<svg class="r" style="left:41.4px;top:270.9px" width="13" height="13" viewBox="0 0 13 13" fill="#4a4a52" stroke="#4a4a52" stroke-width=".5" stroke-linejoin="round"><circle cx="6.400" cy="1.500" r="1.150"/><path d="M2.300 3.900l3.500-1 1.500 1 1.200 2.400-.8.500-1.400-1.500-.8 2.300 1.400 1.500.2 2.900H6.300l-.3-2.400-1.500-1.300-1.500 3.700H1.700l1.800-5.600.4-1.400-.9.400-.6 2-.9-.3.800-2.700z"/><path d="M6.800 12.300l2.600-4.200 2.900 4.200z"/><path d="M3.600 4.600l5.600 5-.5.500-5.600-5z" stroke="none"/></svg>
<div class="t" style="left:105px;top:264.9px;height:24px;line-height:24px;font-size:13.5px;letter-spacing:0.301px;">02-02/2-01</div>
<div class="t" style="left:344px;top:264.9px;height:24px;line-height:24px;font-size:13.5px;width:79px;text-align:center;letter-spacing:-0.188px;">3.30-1-1</div>
<div class="t" style="left:413px;top:264.9px;height:24px;line-height:24px;font-size:13.5px;width:65px;text-align:center;letter-spacing:-0.257px;">38</div>
<div class="t" style="left:479px;top:264.9px;height:24px;line-height:24px;font-size:13.5px;letter-spacing:0.193px;">Устройство щебеночных подушек под фундаменты</div>
<div class="t" style="left:820px;top:264.9px;height:24px;line-height:24px;font-size:13.5px;width:49px;text-align:left;letter-spacing:0.485px;">100 м3…</div>
<div class="r" style="left:0px;top:288px;width:869px;height:24px;background:#ffecc0;"></div>
<svg class="r" style="left:3px;top:292.2px" width="13" height="13" viewBox="0 0 13 13" fill="none" stroke="#4a4a52" stroke-width="1.100" stroke-linecap="round"><path d="M0.600 1.300h11.600" stroke-width="1.600"/><path d="M12 1.800L1 11.800M6.800 11.300h5.200M2.200 4.800h4.500M4.800 4.800L3.200 9.500"/></svg>
<div class="t" style="left:105px;top:288.9px;height:24px;line-height:24px;font-size:13.5px;letter-spacing:0.301px;">02-02/2-01</div>
<div class="t" style="left:344px;top:288.9px;height:24px;line-height:24px;font-size:13.5px;width:79px;text-align:center;letter-spacing:-0.471px;">1.1-1-15…</div>
<div class="t" style="left:413px;top:288.9px;height:24px;line-height:24px;font-size:13.5px;width:65px;text-align:center;letter-spacing:-0.257px;">39</div>
<div class="t" style="left:479px;top:288.9px;height:24px;line-height:24px;font-size:13.5px;letter-spacing:0.164px;">Щебень из естественного камня для строительны…</div>
<div class="t" style="left:820px;top:288.9px;height:24px;line-height:24px;font-size:13.5px;width:53px;text-align:center;">м3</div>
</div>
<div class="r" style="left:916px;top:590px;width:11px;height:307px;background:#f4f4f6;"></div>
<div class="r" style="left:916.5px;top:595px;width:9.5px;height:21px;background:#dcdcde;border-radius:5px"></div>
<div class="r" style="left:47px;top:897px;width:869px;height:11px;background:#f4f4f6;"></div>
<div class="r" style="left:47px;top:898px;width:147.6px;height:10px;background:#dcdcde;border-radius:5px"></div>
<div class="r" style="left:916px;top:897px;width:12px;height:10px;background:#fff;"></div>
<div class="r" style="left:929.3px;top:468.3px;width:988.7px;height:24.7px;background:#ffffff;"></div>
<div class="t" style="left:937.3px;top:469.9px;height:25px;line-height:25px;font-size:14.5px;letter-spacing:0.300px;">Укрупненная смета контракта</div>
<div class="r" style="left:929.3px;top:493px;width:988.7px;height:1px;background:#b4b4b8;"></div>
<div class="r" style="left:929.3px;top:494px;width:988.7px;height:44px;background:#f0f0f2;"></div>
<div class="r" style="left:929.3px;top:538px;width:988.7px;height:1px;background:#b4b4b8;"></div>
<svg class="r" style="left:1828.3px;top:469px;stroke:#1a1a1a;stroke-width:1.900" width="20" height="24" viewBox="0 0 20 24" fill="none" stroke="#45454d" stroke-width="1.8" stroke-linecap="round" stroke-linejoin="round"><rect x="1.8" y="9" width="11" height="8.4" rx="1.6"/><path d="M4.8 6.4h9.6a2 2 0 0 1 2 2v6"/></svg>
<div class="r" style="left:1852.8px;top:487.2px;width:16.5px;height:1.6px;background:#1a1a1a;"></div>
<svg class="r" style="left:1875.3px;top:471px;stroke:#1a1a1a;stroke-width:1.800;stroke-linecap:butt;stroke-linejoin:miter" width="20" height="20" viewBox="0 0 20 20" fill="none" stroke="#45454d" stroke-width="1.8" stroke-linecap="round" stroke-linejoin="round"><path d="M2.5 17.5L17.5 2.5M11 2.5h6.5V9M2.5 11v6.5H9"/></svg>
<svg class="r" style="left:1899.3px;top:471px;stroke:#1a1a1a;stroke-width:1.800;stroke-linecap:butt" width="20" height="20" viewBox="0 0 20 20" fill="none" stroke="#45454d" stroke-width="1.8" stroke-linecap="round" stroke-linejoin="round"><path d="M2 2l16 16M18 2L2 18"/></svg>
<svg class="r" style="left:942px;top:502px;" width="28" height="28" viewBox="0 0 28 28" fill="none" stroke="#45454d" stroke-width="1.8" stroke-linecap="round" stroke-linejoin="round"><path d="M1 2v6.500a2 2 0 0 0 2 2h13a2 2 0 0 0 2-2V2M5 3.500h9M5 6.500h9"/><path d="M1 25.500V19a2 2 0 0 1 2-2h13a2 2 0 0 1 2 2v6.500M5 21h9M5 24h9"/></svg>
<svg class="r" style="left:983.5px;top:502px;stroke:#c9c9cd;stroke-width:1.900" width="28" height="28" viewBox="0 0 28 28" fill="none" stroke="#45454d" stroke-width="1.8" stroke-linecap="round" stroke-linejoin="round"><path d="M1 14.800l10.300 10.400M11.300 14.800L1 25.200"/><path d="M13.500 2.400h10.300l-3.900 4.800v4.600l-2.500-1.300V7.200z" stroke-width="1.500"/></svg>
<svg class="r" style="left:1028px;top:502px;" width="28" height="28" viewBox="0 0 28 28" fill="none" stroke="#45454d" stroke-width="1.8" stroke-linecap="round" stroke-linejoin="round"><path d="M7.500 25V10M1 16l6.500-6.500L14 16"/><path d="M9 3.500h7M13.500 7.500h7M17 11.500h7"/></svg>
<svg class="r" style="left:1076px;top:502px;" width="28" height="28" viewBox="0 0 28 28" fill="none" stroke="#45454d" stroke-width="1.8" stroke-linecap="round" stroke-linejoin="round"><path d="M8 17V3M1.500 9.500L8 3l6.500 6.500M0.800 25.200h14.400"/></svg>
<svg class="r" style="left:1122.5px;top:513px" width="10" height="5" viewBox="0 0 10 5"><path d="M0 0h10L5 5z" fill="#45454d"/></svg>
<svg class="r" style="left:1888.3px;top:503.4px" width="28" height="28" viewBox="0 0 28 28" fill="#f0f0f2" stroke="#1976d2" stroke-width="2.100"><circle cx="9" cy="8.500" r="6.800"/><circle cx="17.500" cy="17" r="6.800"/><text x="9" y="10.800" font-size="6.500" font-weight="bold" text-anchor="middle" fill="#1976d2" stroke="none" font-family="Liberation Sans,sans-serif">8</text><text x="17.500" y="19.300" font-size="6.500" font-weight="bold" text-anchor="middle" fill="#1976d2" stroke="none" font-family="Liberation Sans,sans-serif">15</text></svg>
<div class="t" style="left:931px;top:539.9px;height:50px;line-height:50px;font-size:12.5px;font-weight:bold;color:#111;width:133px;text-align:center;letter-spacing:-0.282px;">Номер документа</div>
<div class="r" style="left:1064px;top:539px;width:1px;height:50px;background:#c6c6cb;"></div>
<div class="t" style="left:1064px;top:539.9px;height:50px;line-height:50px;font-size:12.5px;font-weight:bold;color:#111;width:130px;text-align:center;letter-spacing:-0.430px;">Шифр документа</div>
<div class="r" style="left:1194px;top:539px;width:1px;height:50px;background:#c6c6cb;"></div>
<div class="t" style="left:1194px;top:539.9px;height:50px;line-height:50px;font-size:12.5px;font-weight:bold;color:#111;width:159.5px;text-align:center;letter-spacing:-0.263px;">Номера позиций смет</div>
<div class="r" style="left:1353px;top:539px;width:1px;height:50px;background:#c6c6cb;"></div>
<div class="t" style="left:1353.5px;top:539.9px;height:50px;line-height:50px;font-size:12.5px;font-weight:bold;color:#111;width:116.5px;text-align:center;letter-spacing:-0.308px;">Наименование</div>
<div class="r" style="left:1470px;top:539px;width:1px;height:50px;background:#c6c6cb;"></div>
<div class="t" style="left:1470px;top:539.9px;height:50px;line-height:50px;font-size:12.5px;font-weight:bold;color:#111;width:69px;text-align:center;letter-spacing:-0.213px;">Ед.изм</div>
<div class="r" style="left:1539px;top:539px;width:1px;height:50px;background:#c6c6cb;"></div>
<div class="t" style="left:1539px;top:539.9px;height:50px;line-height:50px;font-size:12.5px;font-weight:bold;color:#111;width:98.5px;text-align:center;letter-spacing:-0.355px;">Количество</div>
<div class="r" style="left:1637px;top:539px;width:1px;height:50px;background:#c6c6cb;"></div>
<div class="r" style="left:931px;top:589px;width:987px;height:1px;background:#c4c4c8;"></div>
<div class="r" style="left:1637.5px;top:563px;width:281px;height:1px;background:#c4c4c8;"></div>
<div class="r" style="left:1873px;top:564px;width:1px;height:25px;background:#c4c4c8;"></div>
<div class="t" style="left:1637.5px;top:565.9px;height:25px;line-height:25px;font-size:12.5px;font-weight:bold;color:#111;width:236px;text-align:center;letter-spacing:-0.439px;">Стоимость с учетом коэффициента</div>
<div class="t" style="left:1888px;top:565.9px;height:25px;line-height:25px;font-size:12.5px;font-weight:bold;color:#111;width:30px;text-align:left;letter-spacing:0.300px;">Стоимость</div>
<div class="r" style="left:931px;top:590px;width:977px;height:307px;overflow:hidden">
<div class="r" style="left:0px;top:0px;width:10px;height:22px;background:#14612e;"></div>
<div class="r" style="left:10px;top:0px;width:970px;height:22px;background:#1b803c;"></div>
<div class="r" style="left:11px;top:9px;width:9.5px;height:2px;background:#fff;"></div>
<div class="t" style="left:45px;top:1.0px;height:22px;line-height:22px;font-size:13.5px;color:#fff;letter-spacing:0.301px;">02-02/2-01</div>
<div class="t" style="left:423.5px;top:1.0px;height:22px;line-height:22px;font-size:13.5px;color:#fff;letter-spacing:0.230px;">Опора ОП-2л</div>
<div class="t" style="left:743px;top:1.0px;height:22px;line-height:22px;font-size:13.5px;color:#fff;width:200px;text-align:right;letter-spacing:-0.257px;">4 740 144.73</div>
<div class="t" style="left:834.5px;top:1.0px;height:22px;line-height:22px;font-size:13.5px;color:#fff;width:200px;text-align:right;letter-spacing:-0.257px;">4 740 144.73</div>
<div class="r" style="left:0px;top:22px;width:10px;height:22px;background:#14612e;"></div>
<div class="r" style="left:10px;top:22px;width:10px;height:22px;background:#1b803c;"></div>
<div class="r" style="left:20px;top:22px;width:960px;height:22px;background:#fafafa;"></div>
<div class="t" style="left:45px;top:23.0px;height:22px;line-height:22px;font-size:13.5px;color:#1a1a1a;letter-spacing:0.301px;">02-02/2-01</div>
<div class="t" style="left:263px;top:23.0px;height:22px;line-height:22px;font-size:13.5px;color:#1a1a1a;width:159.5px;text-align:center;letter-spacing:-0.442px;">1, 2, 3, 4, 5, 6, 7, 10, 11, 1…</div>
<div class="t" style="left:423.5px;top:23.0px;height:22px;line-height:22px;font-size:13.5px;color:#1a1a1a;letter-spacing:0.242px;">Бетонщик</div>
<div class="t" style="left:539px;top:23.0px;height:22px;line-height:22px;font-size:13.5px;color:#1a1a1a;width:69px;text-align:center;letter-spacing:0.250px;">чел/ч</div>
<div class="t" style="left:608px;top:23.0px;height:22px;line-height:22px;font-size:13.5px;color:#1a1a1a;width:98.5px;text-align:center;">0</div>
<div class="t" style="left:743px;top:23.0px;height:22px;line-height:22px;font-size:13.5px;color:#1a1a1a;width:200px;text-align:right;letter-spacing:-0.066px;">3 293 290.32</div>
<div class="t" style="left:834.5px;top:23.0px;height:22px;line-height:22px;font-size:13.5px;color:#1a1a1a;width:200px;text-align:right;letter-spacing:-0.066px;">3 293 290.32</div>
<div class="r" style="left:0px;top:44px;width:10px;height:22px;background:#14612e;"></div>
<div class="r" style="left:10px;top:44px;width:10px;height:22px;background:#1b803c;"></div>
<div class="r" style="left:20px;top:44px;width:960px;height:22px;background:#fff;"></div>
<div class="t" style="left:45px;top:45.0px;height:22px;line-height:22px;font-size:13.5px;color:#1a1a1a;letter-spacing:0.301px;">02-02/2-01</div>
<div class="t" style="left:263px;top:45.0px;height:22px;line-height:22px;font-size:13.5px;color:#1a1a1a;width:159.5px;text-align:center;letter-spacing:-0.056px;">8, 9, 24, 25, 26</div>
<div class="t" style="left:423.5px;top:45.0px;height:22px;line-height:22px;font-size:13.5px;color:#1a1a1a;letter-spacing:0.239px;">Разнорабочий</div>
<div class="t" style="left:539px;top:45.0px;height:22px;line-height:22px;font-size:13.5px;color:#1a1a1a;width:69px;text-align:center;letter-spacing:0.250px;">чел/ч</div>
<div class="t" style="left:608px;top:45.0px;height:22px;line-height:22px;font-size:13.5px;color:#1a1a1a;width:98.5px;text-align:center;">0</div>
<div class="t" style="left:743px;top:45.0px;height:22px;line-height:22px;font-size:13.5px;color:#1a1a1a;width:200px;text-align:right;letter-spacing:-0.248px;">521 796.45</div>
<div class="t" style="left:834.5px;top:45.0px;height:22px;line-height:22px;font-size:13.5px;color:#1a1a1a;width:200px;text-align:right;letter-spacing:-0.248px;">521 796.45</div>
<div class="r" style="left:0px;top:66px;width:10px;height:22px;background:#14612e;"></div>
<div class="r" style="left:10px;top:66px;width:10px;height:22px;background:#1b803c;"></div>
<div class="r" style="left:20px;top:66px;width:960px;height:22px;background:#fafafa;"></div>
<div class="t" style="left:45px;top:67.0px;height:22px;line-height:22px;font-size:13.5px;color:#1a1a1a;letter-spacing:0.301px;">02-02/2-01</div>
<div class="t" style="left:263px;top:67.0px;height:22px;line-height:22px;font-size:13.5px;color:#1a1a1a;width:159.5px;text-align:center;letter-spacing:-0.277px;">17, 18, 19, 20, 21, 22, 23</div>
<div class="t" style="left:423.5px;top:67.0px;height:22px;line-height:22px;font-size:13.5px;color:#1a1a1a;letter-spacing:-0.015px;">Электромонтаж…</div>
<div class="t" style="left:539px;top:67.0px;height:22px;line-height:22px;font-size:13.5px;color:#1a1a1a;width:69px;text-align:center;letter-spacing:0.250px;">чел/ч</div>
<div class="t" style="left:608px;top:67.0px;height:22px;line-height:22px;font-size:13.5px;color:#1a1a1a;width:98.5px;text-align:center;">0</div>
<div class="t" style="left:743px;top:67.0px;height:22px;line-height:22px;font-size:13.5px;color:#1a1a1a;width:200px;text-align:right;letter-spacing:-0.378px;">731 994.51</div>
<div class="t" style="left:834.5px;top:67.0px;height:22px;line-height:22px;font-size:13.5px;color:#1a1a1a;width:200px;text-align:right;letter-spacing:-0.378px;">731 994.51</div>
<div class="r" style="left:0px;top:88px;width:10px;height:22px;background:#14612e;"></div>
<div class="r" style="left:10px;top:88px;width:10px;height:22px;background:#1b803c;"></div>
<div class="r" style="left:20px;top:88px;width:960px;height:22px;background:#fff;"></div>
<div class="t" style="left:45px;top:89.0px;height:22px;line-height:22px;font-size:13.5px;color:#1a1a1a;letter-spacing:0.301px;">02-02/2-01</div>
<div class="t" style="left:263px;top:89.0px;height:22px;line-height:22px;font-size:13.5px;color:#1a1a1a;width:159.5px;text-align:center;letter-spacing:-0.325px;">27</div>
<div class="t" style="left:423.5px;top:89.0px;height:22px;line-height:22px;font-size:13.5px;color:#1a1a1a;letter-spacing:0.052px;">Сварщик</div>
<div class="t" style="left:539px;top:89.0px;height:22px;line-height:22px;font-size:13.5px;color:#1a1a1a;width:69px;text-align:center;letter-spacing:0.250px;">чел/ч</div>
<div class="t" style="left:608px;top:89.0px;height:22px;line-height:22px;font-size:13.5px;color:#1a1a1a;width:98.5px;text-align:center;">0</div>
<div class="t" style="left:743px;top:89.0px;height:22px;line-height:22px;font-size:13.5px;color:#1a1a1a;width:200px;text-align:right;letter-spacing:-0.378px;">78 127.67</div>
<div class="t" style="left:834.5px;top:89.0px;height:22px;line-height:22px;font-size:13.5px;color:#1a1a1a;width:200px;text-align:right;letter-spacing:-0.378px;">78 127.67</div>
<div class="r" style="left:0px;top:110px;width:10px;height:22px;background:#14612e;"></div>
<div class="r" style="left:10px;top:110px;width:10px;height:22px;background:#1b803c;"></div>
<div class="r" style="left:20px;top:110px;width:960px;height:22px;background:#fafafa;"></div>
<div class="t" style="left:45px;top:111.0px;height:22px;line-height:22px;font-size:13.5px;color:#1a1a1a;letter-spacing:0.301px;">02-02/2-01</div>
<div class="t" style="left:263px;top:111.0px;height:22px;line-height:22px;font-size:13.5px;color:#1a1a1a;width:159.5px;text-align:center;letter-spacing:-0.060px;">28, 29, 30</div>
<div class="t" style="left:423.5px;top:111.0px;height:22px;line-height:22px;font-size:13.5px;color:#1a1a1a;letter-spacing:0.352px;">Монтажник</div>
<div class="t" style="left:539px;top:111.0px;height:22px;line-height:22px;font-size:13.5px;color:#1a1a1a;width:69px;text-align:center;letter-spacing:0.250px;">чел/ч</div>
<div class="t" style="left:608px;top:111.0px;height:22px;line-height:22px;font-size:13.5px;color:#1a1a1a;width:98.5px;text-align:center;">0</div>
<div class="t" style="left:743px;top:111.0px;height:22px;line-height:22px;font-size:13.5px;color:#1a1a1a;width:200px;text-align:right;letter-spacing:-0.267px;">46 971.56</div>
<div class="t" style="left:834.5px;top:111.0px;height:22px;line-height:22px;font-size:13.5px;color:#1a1a1a;width:200px;text-align:right;letter-spacing:-0.267px;">46 971.56</div>
<div class="r" style="left:0px;top:132px;width:10px;height:22px;background:#14612e;"></div>
<div class="r" style="left:10px;top:132px;width:10px;height:22px;background:#1b803c;"></div>
<div class="r" style="left:20px;top:132px;width:960px;height:22px;background:#fff;"></div>
<div class="t" style="left:45px;top:133.0px;height:22px;line-height:22px;font-size:13.5px;color:#1a1a1a;letter-spacing:0.301px;">02-02/2-01</div>
<div class="t" style="left:423.5px;top:133.0px;height:22px;line-height:22px;font-size:13.5px;color:#1a1a1a;letter-spacing:0.222px;">Прочие работы</div>
<div class="t" style="left:743px;top:133.0px;height:22px;line-height:22px;font-size:13.5px;color:#1a1a1a;width:200px;text-align:right;letter-spacing:-0.122px;">67 964.22</div>
<div class="t" style="left:834.5px;top:133.0px;height:22px;line-height:22px;font-size:13.5px;color:#1a1a1a;width:200px;text-align:right;letter-spacing:-0.122px;">67 964.22</div>
<div class="r" style="left:0px;top:154px;width:10px;height:22px;background:#14612e;"></div>
<div class="r" style="left:10px;top:154px;width:970px;height:22px;background:#1b803c;"></div>
<div class="r" style="left:11px;top:163px;width:9.5px;height:2px;background:#fff;"></div>
<div class="t" style="left:45px;top:155.0px;height:22px;line-height:22px;font-size:13.5px;color:#fff;letter-spacing:0.301px;">02-02/2-01</div>
<div class="t" style="left:423.5px;top:155.0px;height:22px;line-height:22px;font-size:13.5px;color:#fff;letter-spacing:0.230px;">Опора ОП-3л</div>
<div class="t" style="left:743px;top:155.0px;height:22px;line-height:22px;font-size:13.5px;color:#fff;width:200px;text-align:right;letter-spacing:-0.174px;">6 130 823.33</div>
<div class="t" style="left:834.5px;top:155.0px;height:22px;line-height:22px;font-size:13.5px;color:#fff;width:200px;text-align:right;letter-spacing:-0.174px;">6 130 823.33</div>
<div class="r" style="left:0px;top:176px;width:10px;height:22px;background:#14612e;"></div>
<div class="r" style="left:10px;top:176px;width:10px;height:22px;background:#1b803c;"></div>
<div class="r" style="left:20px;top:176px;width:960px;height:22px;background:#fff;"></div>
<div class="t" style="left:45px;top:177.0px;height:22px;line-height:22px;font-size:13.5px;color:#1a1a1a;letter-spacing:0.301px;">02-02/2-01</div>
<div class="t" style="left:263px;top:177.0px;height:22px;line-height:22px;font-size:13.5px;color:#1a1a1a;width:159.5px;text-align:center;letter-spacing:-0.059px;">33, 34, 38, 39</div>
<div class="t" style="left:423.5px;top:177.0px;height:22px;line-height:22px;font-size:13.5px;color:#1a1a1a;letter-spacing:0.354px;">Изолировщик</div>
<div class="t" style="left:539px;top:177.0px;height:22px;line-height:22px;font-size:13.5px;color:#1a1a1a;width:69px;text-align:center;letter-spacing:0.250px;">чел/ч</div>
<div class="t" style="left:608px;top:177.0px;height:22px;line-height:22px;font-size:13.5px;color:#1a1a1a;width:98.5px;text-align:center;">0</div>
<div class="t" style="left:743px;top:177.0px;height:22px;line-height:22px;font-size:13.5px;color:#1a1a1a;width:200px;text-align:right;letter-spacing:-0.324px;">1 886 917.89</div>
<div class="t" style="left:834.5px;top:177.0px;height:22px;line-height:22px;font-size:13.5px;color:#1a1a1a;width:200px;text-align:right;letter-spacing:-0.324px;">1 886 917.89</div>
<div class="r" style="left:0px;top:198px;width:10px;height:22px;background:#14612e;"></div>
<div class="r" style="left:10px;top:198px;width:10px;height:22px;background:#1b803c;"></div>
<div class="r" style="left:20px;top:198px;width:960px;height:22px;background:#fafafa;"></div>
<div class="t" style="left:45px;top:199.0px;height:22px;line-height:22px;font-size:13.5px;color:#1a1a1a;letter-spacing:0.301px;">02-02/2-01</div>
<div class="t" style="left:263px;top:199.0px;height:22px;line-height:22px;font-size:13.5px;color:#1a1a1a;width:159.5px;text-align:center;letter-spacing:-0.267px;">35, 42, 43, 44, 45, 46, 47…</div>
<div class="t" style="left:423.5px;top:199.0px;height:22px;line-height:22px;font-size:13.5px;color:#1a1a1a;letter-spacing:0.242px;">Бетонщик</div>
<div class="t" style="left:539px;top:199.0px;height:22px;line-height:22px;font-size:13.5px;color:#1a1a1a;width:69px;text-align:center;letter-spacing:0.250px;">чел/ч</div>
<div class="t" style="left:608px;top:199.0px;height:22px;line-height:22px;font-size:13.5px;color:#1a1a1a;width:98.5px;text-align:center;">0</div>
<div class="t" style="left:743px;top:199.0px;height:22px;line-height:22px;font-size:13.5px;color:#1a1a1a;width:200px;text-align:right;letter-spacing:-0.257px;">2 618 572.72</div>
<div class="t" style="left:834.5px;top:199.0px;height:22px;line-height:22px;font-size:13.5px;color:#1a1a1a;width:200px;text-align:right;letter-spacing:-0.257px;">2 618 572.72</div>
<div class="r" style="left:0px;top:220px;width:10px;height:22px;background:#14612e;"></div>
<div class="r" style="left:10px;top:220px;width:10px;height:22px;background:#1b803c;"></div>
<div class="r" style="left:20px;top:220px;width:960px;height:22px;background:#fff;"></div>
<div class="t" style="left:45px;top:221.0px;height:22px;line-height:22px;font-size:13.5px;color:#1a1a1a;letter-spacing:0.301px;">02-02/2-01</div>
<div class="t" style="left:263px;top:221.0px;height:22px;line-height:22px;font-size:13.5px;color:#1a1a1a;width:159.5px;text-align:center;letter-spacing:-0.279px;">40, 41</div>
<div class="t" style="left:423.5px;top:221.0px;height:22px;line-height:22px;font-size:13.5px;color:#1a1a1a;letter-spacing:0.239px;">Разнорабочий</div>
<div class="t" style="left:539px;top:221.0px;height:22px;line-height:22px;font-size:13.5px;color:#1a1a1a;width:69px;text-align:center;letter-spacing:0.250px;">чел/ч</div>
<div class="t" style="left:608px;top:221.0px;height:22px;line-height:22px;font-size:13.5px;color:#1a1a1a;width:98.5px;text-align:center;">0</div>
<div class="t" style="left:743px;top:221.0px;height:22px;line-height:22px;font-size:13.5px;color:#1a1a1a;width:200px;text-align:right;letter-spacing:-0.389px;">4 504.11</div>
<div class="t" style="left:834.5px;top:221.0px;height:22px;line-height:22px;font-size:13.5px;color:#1a1a1a;width:200px;text-align:right;letter-spacing:-0.389px;">4 504.11</div>
<div class="r" style="left:0px;top:242px;width:10px;height:22px;background:#14612e;"></div>
<div class="r" style="left:10px;top:242px;width:10px;height:22px;background:#1b803c;"></div>
<div class="r" style="left:20px;top:242px;width:960px;height:22px;background:#fafafa;"></div>
<div class="t" style="left:45px;top:243.0px;height:22px;line-height:22px;font-size:13.5px;color:#1a1a1a;letter-spacing:0.301px;">02-02/2-01</div>
<div class="t" style="left:263px;top:243.0px;height:22px;line-height:22px;font-size:13.5px;color:#1a1a1a;width:159.5px;text-align:center;letter-spacing:-0.131px;">50, 60, 61, 62, 63</div>
<div class="t" style="left:423.5px;top:243.0px;height:22px;line-height:22px;font-size:13.5px;color:#1a1a1a;letter-spacing:0.052px;">Сварщик</div>
<div class="t" style="left:539px;top:243.0px;height:22px;line-height:22px;font-size:13.5px;color:#1a1a1a;width:69px;text-align:center;letter-spacing:0.250px;">чел/ч</div>
<div class="t" style="left:608px;top:243.0px;height:22px;line-height:22px;font-size:13.5px;color:#1a1a1a;width:98.5px;text-align:center;">0</div>
<div class="t" style="left:743px;top:243.0px;height:22px;line-height:22px;font-size:13.5px;color:#1a1a1a;width:200px;text-align:right;letter-spacing:-0.118px;">704 590.56</div>
<div class="t" style="left:834.5px;top:243.0px;height:22px;line-height:22px;font-size:13.5px;color:#1a1a1a;width:200px;text-align:right;letter-spacing:-0.118px;">704 590.56</div>
<div class="r" style="left:0px;top:264px;width:10px;height:22px;background:#14612e;"></div>
<div class="r" style="left:10px;top:264px;width:10px;height:22px;background:#1b803c;"></div>
<div class="r" style="left:20px;top:264px;width:960px;height:22px;background:#fff;"></div>
<div class="t" style="left:45px;top:265.0px;height:22px;line-height:22px;font-size:13.5px;color:#1a1a1a;letter-spacing:0.301px;">02-02/2-01</div>
<div class="t" style="left:263px;top:265.0px;height:22px;line-height:22px;font-size:13.5px;color:#1a1a1a;width:159.5px;text-align:center;letter-spacing:-0.117px;">51, 52, 53, 54, 55, 56</div>
<div class="t" style="left:423.5px;top:265.0px;height:22px;line-height:22px;font-size:13.5px;color:#1a1a1a;letter-spacing:-0.015px;">Электромонтаж…</div>
<div class="t" style="left:539px;top:265.0px;height:22px;line-height:22px;font-size:13.5px;color:#1a1a1a;width:69px;text-align:center;letter-spacing:0.250px;">чел/ч</div>
<div class="t" style="left:608px;top:265.0px;height:22px;line-height:22px;font-size:13.5px;color:#1a1a1a;width:98.5px;text-align:center;">0</div>
<div class="t" style="left:743px;top:265.0px;height:22px;line-height:22px;font-size:13.5px;color:#1a1a1a;width:200px;text-align:right;letter-spacing:-0.118px;">830 847.03</div>
<div class="t" style="left:834.5px;top:265.0px;height:22px;line-height:22px;font-size:13.5px;color:#1a1a1a;width:200px;text-align:right;letter-spacing:-0.118px;">830 847.03</div>
<div class="r" style="left:0px;top:286px;width:10px;height:22px;background:#14612e;"></div>
<div class="r" style="left:10px;top:286px;width:10px;height:22px;background:#1b803c;"></div>
<div class="r" style="left:20px;top:286px;width:960px;height:22px;background:#fafafa;"></div>
<div class="t" style="left:45px;top:287.0px;height:22px;line-height:22px;font-size:13.5px;color:#1a1a1a;letter-spacing:0.301px;">02-02/2-01</div>
<div class="t" style="left:423.5px;top:287.0px;height:22px;line-height:22px;font-size:13.5px;color:#1a1a1a;letter-spacing:0.222px;">Прочие работы</div>
<div class="t" style="left:743px;top:287.0px;height:22px;line-height:22px;font-size:13.5px;color:#1a1a1a;width:200px;text-align:right;letter-spacing:-0.211px;">85 391.02</div>
<div class="t" style="left:834.5px;top:287.0px;height:22px;line-height:22px;font-size:13.5px;color:#1a1a1a;width:200px;text-align:right;letter-spacing:-0.211px;">85 391.02</div>
</div>
<div class="r" style="left:1908px;top:590px;width:10px;height:307px;background:#f4f4f6;"></div>
<div class="r" style="left:1908.5px;top:590px;width:9.5px;height:151px;background:#dcdcde;border-radius:5px"></div>
<div class="r" style="left:931px;top:897px;width:977px;height:11px;background:#f4f4f6;"></div>
<div class="r" style="left:931px;top:898px;width:262.70000000000005px;height:10px;background:#dcdcde;border-radius:5px"></div>
<div class="r" style="left:1908px;top:897px;width:10px;height:10px;background:#fff;"></div>
<div class="r" style="left:928px;top:467px;width:1.3px;height:440px;background:#c4c4c8;"></div>
<div class="r" style="left:929.6px;top:539px;width:1.2px;height:368px;background:#c9c9cd;"></div>
<div class="r" style="left:47px;top:588.8px;width:880px;height:1.2px;background:#c6c6cb;"></div>
<div class="r" style="left:931px;top:588.8px;width:987px;height:1.2px;background:#c6c6cb;"></div>
<div class="r" style="left:46px;top:24px;width:1014px;height:1px;background:#cdcdd1;"></div>
<div class="r" style="left:1889px;top:24px;width:29px;height:1px;background:#cdcdd1;"></div>
<div class="r" style="left:687px;top:0px;width:1px;height:24px;background:#d4d4d8;"></div>
</body></html>
